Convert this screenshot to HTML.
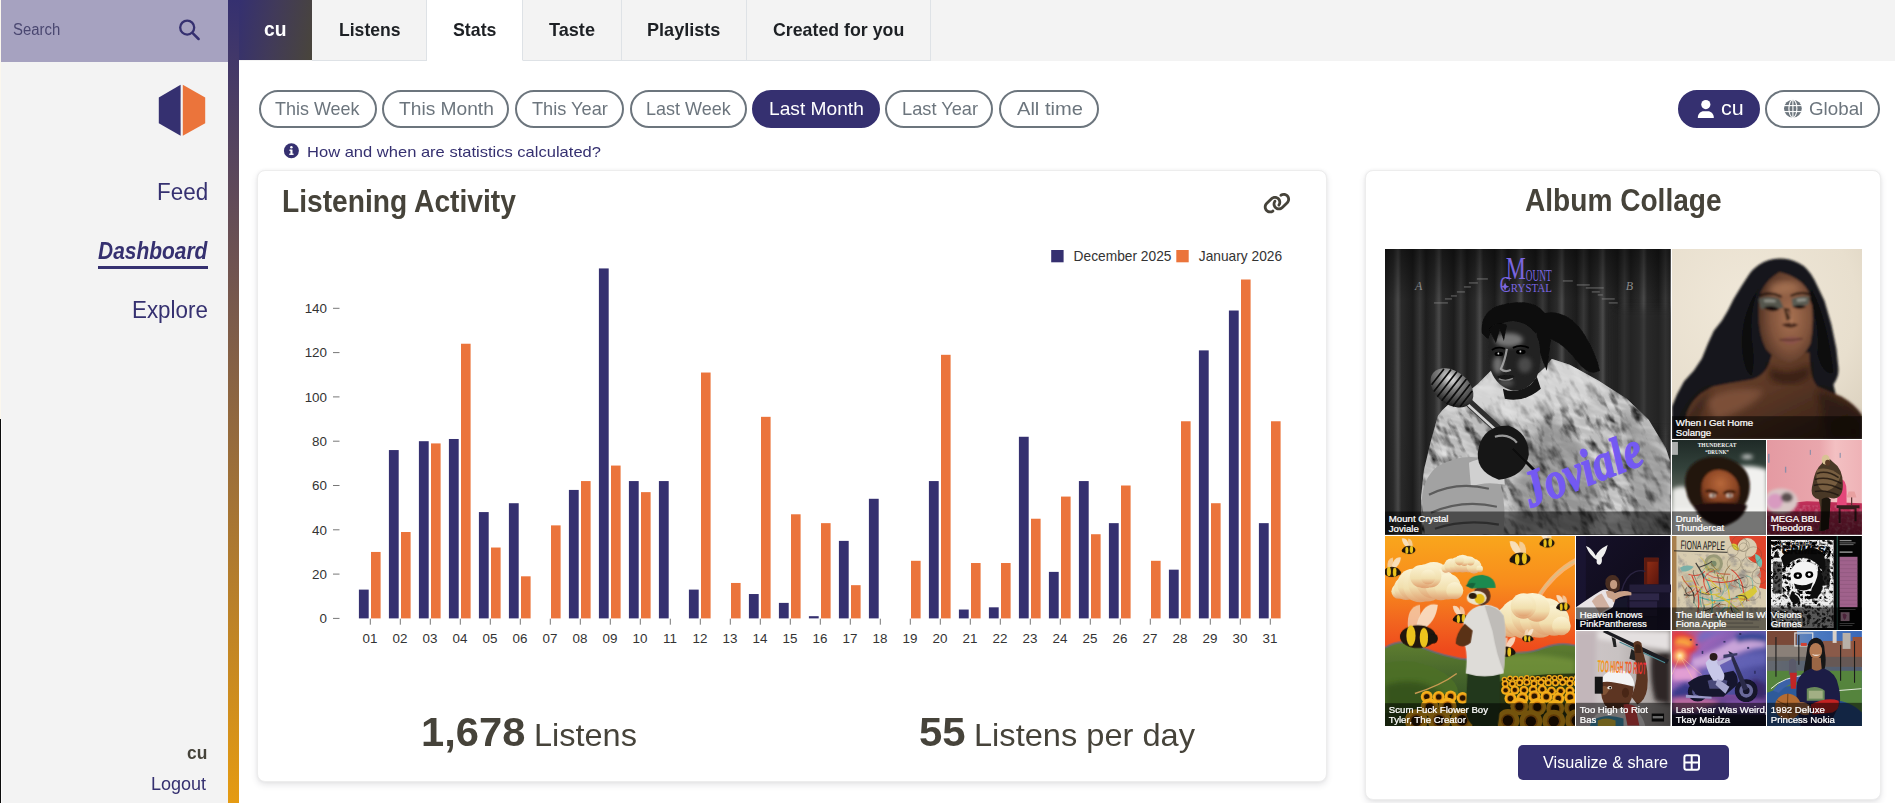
<!DOCTYPE html>
<html lang="en"><head><meta charset="utf-8"><title>cu - Stats - ListenBrainz</title>
<style>
html,body{margin:0;padding:0}
body{width:1895px;height:803px;overflow:hidden;background:#fff;position:relative;font-family:'Liberation Sans',sans-serif}
aside,header,main,nav,section,form,figure,h3{margin:0;padding:0;position:static;display:block}
.abs,.t,.pill,.tab,.card{position:absolute}
.t{line-height:1;white-space:pre;transform-origin:0 0;display:block;text-decoration:none;margin:0}
.pill{top:90px;height:34px;border:2px solid #6c757d;border-radius:19px;box-sizing:content-box}
.pill.on{background:#353070;border-color:#353070}
.tab{top:0;height:60px;background:#f3f3f3;border-right:1px solid #dee2e6;border-bottom:1px solid #dee2e6}
.card{background:#fff;border:1px solid #ededed;border-radius:8px;box-shadow:0 3px 6px rgba(60,64,80,.13),0 0 3px rgba(60,64,80,.06);box-sizing:border-box}
</style></head><body>
<header id="topbar">
<div class="abs" style="left:239px;top:0;width:1656px;height:61px;background:#f3f3f3"></div>
<nav id="tabs">
<div class="abs" style="left:239px;top:0;width:73px;height:60px;background:linear-gradient(100deg,#353070 0%,#413a5a 45%,#49453b 100%)"></div>
<div class="tab" style="left:312px;width:114px"></div>
<div class="tab active" style="left:427px;width:95px;background:#fff;border-bottom-color:#fff"></div>
<div class="tab" style="left:523px;width:98px"></div>
<div class="tab" style="left:622px;width:124px"></div>
<div class="tab" style="left:747px;width:183px"></div>
<a class="t" href="#" style="left:263.76px;top:19.10px;font-size:20.5px;color:#fff;transform:scaleX(0.9398);font-weight:700;">cu</a>
<a class="t" href="#" style="left:338.81px;top:20.10px;font-size:19px;color:#1d2024;transform:scaleX(0.9249);font-weight:700;">Listens</a>
<a class="t" href="#" style="left:452.65px;top:20.10px;font-size:19px;color:#1d2024;transform:scaleX(0.9348);font-weight:700;">Stats</a>
<a class="t" href="#" style="left:549.04px;top:20.10px;font-size:19px;color:#1d2024;transform:scaleX(0.9528);font-weight:700;">Taste</a>
<a class="t" href="#" style="left:647.48px;top:20.10px;font-size:19px;color:#1d2024;transform:scaleX(0.9515);font-weight:700;">Playlists</a>
<a class="t" href="#" style="left:773.48px;top:20.10px;font-size:19px;color:#1d2024;transform:scaleX(0.9347);font-weight:700;">Created for you</a>
</nav></header>
<aside id="sidebar">
<div class="abs" style="left:0;top:0;width:228px;height:803px;background:#f3f3f3"></div>
<form id="search"><div class="abs" style="left:0;top:0;width:228px;height:61.5px;background:#a6a2c0"></div>
<svg class="abs" style="left:177px;top:18px" width="24" height="24" viewBox="177 18 24 24"><circle cx="187.2" cy="27.6" r="7" fill="none" stroke="#353070" stroke-width="2.3"/><line x1="192.4" y1="32.8" x2="198.6" y2="39" stroke="#353070" stroke-width="2.5" stroke-linecap="round"/></svg>
<span class="t" style="left:12.70px;top:22.08px;font-size:15.8px;color:#4a4770;transform:scaleX(0.9436);font-weight:400;">Search</span></form>
<div class="abs" style="left:228px;top:0;width:11px;height:803px;background:linear-gradient(180deg,#353070 0%,#e59b12 100%)"></div>
<div class="abs" style="left:0;top:0;width:1px;height:419px;background:#fbf7ee"></div>
<div class="abs" style="left:0;top:419px;width:1px;height:384px;background:#0c0c0c"></div>
<div class="abs" style="left:1px;top:419px;width:1px;height:384px;background:#fbfbfb"></div>
<svg class="abs" id="logo" style="left:157px;top:83px" width="50" height="55" viewBox="157 83 50 55"><polygon points="180.6,84.8 180.6,135.8 158.8,123.2 158.8,97.4" fill="#353070"/><polygon points="182.8,84.8 205.2,97.4 205.2,123.2 182.8,135.8" fill="#eb743b"/></svg>
<nav id="sidenav">
<a class="t" href="#" style="left:156.72px;top:181.41px;font-size:23px;color:#353070;transform:scaleX(0.9746);font-weight:400;">Feed</a>
<a class="t" href="#" style="left:98.22px;top:239.90px;font-size:23px;color:#353070;transform:scaleX(0.9107);font-weight:700;font-style:italic;">Dashboard</a>
<a class="t" href="#" style="left:131.52px;top:299.01px;font-size:23px;color:#353070;transform:scaleX(0.9731);font-weight:400;">Explore</a>
<div class="abs" style="left:98px;top:265.6px;width:109.5px;height:3.2px;background:#353070"></div>
</nav>
<div id="userbox"><strong class="t" style="left:187.20px;top:743.10px;font-size:19px;color:#46433a;transform:scaleX(0.9146);font-weight:700;">cu</strong><a class="t" href="#" style="left:151.19px;top:774.02px;font-size:19px;color:#353070;transform:scaleX(0.9486);font-weight:400;">Logout</a></div>
</aside>
<main id="stats">
<nav id="range">
<div class="pill" style="left:259.0px;width:113.6px"></div>
<div class="pill" style="left:382.3px;width:122.9px"></div>
<div class="pill" style="left:515.0px;width:105.0px"></div>
<div class="pill" style="left:630.0px;width:112.6px"></div>
<div class="pill on" style="left:752.0px;width:124.0px"></div>
<div class="pill" style="left:885.0px;width:104.4px"></div>
<div class="pill" style="left:999.0px;width:96.0px"></div>
<span class="t" style="left:275.36px;top:98.82px;font-size:19px;color:#6c757d;transform:scaleX(0.9454);font-weight:400;">This Week</span>
<span class="t" style="left:398.73px;top:98.82px;font-size:19px;color:#6c757d;transform:scaleX(1.0093);font-weight:400;">This Month</span>
<span class="t" style="left:531.95px;top:98.82px;font-size:19px;color:#6c757d;transform:scaleX(0.9579);font-weight:400;">This Year</span>
<span class="t" style="left:646.19px;top:98.82px;font-size:19px;color:#6c757d;transform:scaleX(0.9474);font-weight:400;">Last Week</span>
<span class="t" style="left:768.79px;top:98.82px;font-size:19px;color:#fff;transform:scaleX(1.0087);font-weight:400;">Last Month</span>
<span class="t" style="left:901.57px;top:98.82px;font-size:19px;color:#6c757d;transform:scaleX(0.9590);font-weight:400;">Last Year</span>
<span class="t" style="left:1016.64px;top:98.82px;font-size:19px;color:#6c757d;transform:scaleX(1.0576);font-weight:400;">All time</span>
<svg class="abs" style="left:283px;top:142px" width="17" height="17" viewBox="283 142 17 17"><circle cx="291.4" cy="150.7" r="7.5" fill="#353070"/><rect x="290.4" y="149.6" width="2.1" height="5" fill="#fff"/><rect x="289.4" y="149.6" width="2" height="1.3" fill="#fff"/><rect x="289.2" y="153.6" width="4.4" height="1.3" fill="#fff"/><circle cx="291.4" cy="147.2" r="1.25" fill="#fff"/></svg>
<a class="t" href="#" style="left:306.94px;top:143.69px;font-size:15px;color:#353070;transform:scaleX(1.1018);font-weight:400;">How and when are statistics calculated?</a>
</nav>
<nav id="scope">
<div class="pill on" style="left:1677.8px;width:78.0px"></div>
<div class="pill" style="left:1764.9px;width:111.1px"></div>
<svg class="abs" style="left:1697px;top:99px" width="18" height="20" viewBox="1697 99 18 20"><circle cx="1705.8" cy="104.6" r="4.6" fill="#fff"/><path d="M1697.8 117.9c0-4.2 2.8-6.6 6-6.6h4c3.2 0 6 2.4 6 6.6z" fill="#fff"/></svg>
<svg class="abs" style="left:1783px;top:99px" width="20" height="20" viewBox="1783 99 20 20"><circle cx="1792.9" cy="108.6" r="8.9" fill="#6c757d"/><g stroke="#fff" stroke-width="1.1" fill="none"><ellipse cx="1792.9" cy="108.6" rx="4" ry="8.9"/><line x1="1792.9" y1="99.7" x2="1792.9" y2="117.5"/><line x1="1784" y1="105.6" x2="1801.8" y2="105.6"/><line x1="1784" y1="111.6" x2="1801.8" y2="111.6"/></g></svg>
<span class="t" style="left:1720.83px;top:97.92px;font-size:20px;color:#fff;transform:scaleX(1.0748);font-weight:400;">cu</span>
<span class="t" style="left:1808.83px;top:98.92px;font-size:19px;color:#6c757d;transform:scaleX(0.9874);font-weight:400;">Global</span>
</nav>
<section id="listening-activity">
<div class="card" style="left:257px;top:169.5px;width:1069.5px;height:612px"></div>
<h3 class="t" style="left:282.16px;top:185.50px;font-size:31px;color:#46433a;transform:scaleX(0.9091);font-weight:700;">Listening Activity</h3>
<svg class="abs" style="left:1262.7px;top:191.9px" width="27.84" height="22.27" viewBox="0 0 640 512"><path fill="#46433a" d="M579.8 267.7c56.5-56.5 56.500-148 0-204.500c-50-50-128.800-56.500-186.300-15.400l-1.600 1.100c-14.400 10.300-17.700 30.300-7.400 44.600s30.300 17.700 44.600 7.400l1.600-1.100c32.100-22.900 76-19.300 103.800 8.600c31.500 31.500 31.500 82.500 0 114L422.300 334.800c-31.500 31.500-82.500 31.500-114 0c-27.900-27.900-31.500-71.800-8.600-103.800l1.100-1.600c10.300-14.400 6.900-34.400-7.400-44.600s-34.400-6.900-44.600 7.400l-1.100 1.600C206.500 251.200 213 330 263 380c56.500 56.500 148 56.500 204.500 0L579.800 267.700zM60.200 244.300c-56.500 56.500-56.500 148 0 204.500c50 50 128.800 56.500 186.300 15.400l1.600-1.100c14.400-10.300 17.700-30.300 7.400-44.600s-30.300-17.700-44.600-7.400l-1.600 1.100c-32.100 22.900-76 19.300-103.800-8.600C74 372 74 321 105.500 289.500L217.700 177.200c31.500-31.500 82.500-31.500 114 0c27.900 27.900 31.500 71.800 8.600 103.900l-1.100 1.600c-10.300 14.400-6.900 34.400 7.400 44.600s34.400 6.900 44.600-7.400l1.100-1.600C433.500 260.800 427 182 377 132c-56.500-56.500-148-56.500-204.500 0L60.200 244.300z"/></svg>
<svg class="abs" style="left:258px;top:230px" width="1068" height="430" viewBox="258 230 1068 430" font-family="Liberation Sans, sans-serif" font-size="13.4" fill="#333">
<line x1="333" x2="339.5" y1="618.40" y2="618.40" stroke="#777" stroke-width="1"/>
<text x="327" y="623.10" text-anchor="end">0</text>
<line x1="333" x2="339.5" y1="574.10" y2="574.10" stroke="#777" stroke-width="1"/>
<text x="327" y="578.80" text-anchor="end">20</text>
<line x1="333" x2="339.5" y1="529.80" y2="529.80" stroke="#777" stroke-width="1"/>
<text x="327" y="534.50" text-anchor="end">40</text>
<line x1="333" x2="339.5" y1="485.50" y2="485.50" stroke="#777" stroke-width="1"/>
<text x="327" y="490.20" text-anchor="end">60</text>
<line x1="333" x2="339.5" y1="441.20" y2="441.20" stroke="#777" stroke-width="1"/>
<text x="327" y="445.90" text-anchor="end">80</text>
<line x1="333" x2="339.5" y1="396.90" y2="396.90" stroke="#777" stroke-width="1"/>
<text x="327" y="401.60" text-anchor="end">100</text>
<line x1="333" x2="339.5" y1="352.60" y2="352.60" stroke="#777" stroke-width="1"/>
<text x="327" y="357.30" text-anchor="end">120</text>
<line x1="333" x2="339.5" y1="308.30" y2="308.30" stroke="#777" stroke-width="1"/>
<text x="327" y="313.00" text-anchor="end">140</text>
<line x1="370.3" x2="370.3" y1="618.7" y2="624.7" stroke="#777" stroke-width="1"/>
<text x="370.0" y="643" text-anchor="middle">01</text>
<rect x="358.9" y="589.61" width="9.8" height="28.79" fill="#353070"/>
<rect x="371.0" y="551.95" width="9.6" height="66.45" fill="#eb743b"/>
<line x1="400.3" x2="400.3" y1="618.7" y2="624.7" stroke="#777" stroke-width="1"/>
<text x="400.0" y="643" text-anchor="middle">02</text>
<rect x="388.9" y="450.06" width="9.8" height="168.34" fill="#353070"/>
<rect x="401.0" y="532.01" width="9.6" height="86.38" fill="#eb743b"/>
<line x1="430.3" x2="430.3" y1="618.7" y2="624.7" stroke="#777" stroke-width="1"/>
<text x="430.0" y="643" text-anchor="middle">03</text>
<rect x="418.9" y="441.20" width="9.8" height="177.20" fill="#353070"/>
<rect x="431.0" y="443.41" width="9.6" height="174.98" fill="#eb743b"/>
<line x1="460.3" x2="460.3" y1="618.7" y2="624.7" stroke="#777" stroke-width="1"/>
<text x="460.0" y="643" text-anchor="middle">04</text>
<rect x="448.9" y="438.99" width="9.8" height="179.41" fill="#353070"/>
<rect x="461.0" y="343.74" width="9.6" height="274.66" fill="#eb743b"/>
<line x1="490.3" x2="490.3" y1="618.7" y2="624.7" stroke="#777" stroke-width="1"/>
<text x="490.0" y="643" text-anchor="middle">05</text>
<rect x="478.9" y="512.08" width="9.8" height="106.32" fill="#353070"/>
<rect x="491.0" y="547.52" width="9.6" height="70.88" fill="#eb743b"/>
<line x1="520.3" x2="520.3" y1="618.7" y2="624.7" stroke="#777" stroke-width="1"/>
<text x="520.0" y="643" text-anchor="middle">06</text>
<rect x="508.9" y="503.22" width="9.8" height="115.18" fill="#353070"/>
<rect x="521.0" y="576.31" width="9.6" height="42.08" fill="#eb743b"/>
<line x1="550.3" x2="550.3" y1="618.7" y2="624.7" stroke="#777" stroke-width="1"/>
<text x="550.0" y="643" text-anchor="middle">07</text>
<rect x="551.0" y="525.37" width="9.6" height="93.03" fill="#eb743b"/>
<line x1="580.3" x2="580.3" y1="618.7" y2="624.7" stroke="#777" stroke-width="1"/>
<text x="580.0" y="643" text-anchor="middle">08</text>
<rect x="568.9" y="489.93" width="9.8" height="128.47" fill="#353070"/>
<rect x="581.0" y="481.07" width="9.6" height="137.33" fill="#eb743b"/>
<line x1="610.3" x2="610.3" y1="618.7" y2="624.7" stroke="#777" stroke-width="1"/>
<text x="610.0" y="643" text-anchor="middle">09</text>
<rect x="598.9" y="268.43" width="9.8" height="349.97" fill="#353070"/>
<rect x="611.0" y="465.56" width="9.6" height="152.83" fill="#eb743b"/>
<line x1="640.3" x2="640.3" y1="618.7" y2="624.7" stroke="#777" stroke-width="1"/>
<text x="640.0" y="643" text-anchor="middle">10</text>
<rect x="628.9" y="481.07" width="9.8" height="137.33" fill="#353070"/>
<rect x="641.0" y="492.14" width="9.6" height="126.25" fill="#eb743b"/>
<line x1="670.3" x2="670.3" y1="618.7" y2="624.7" stroke="#777" stroke-width="1"/>
<text x="670.0" y="643" text-anchor="middle">11</text>
<rect x="658.9" y="481.07" width="9.8" height="137.33" fill="#353070"/>
<line x1="700.3" x2="700.3" y1="618.7" y2="624.7" stroke="#777" stroke-width="1"/>
<text x="700.0" y="643" text-anchor="middle">12</text>
<rect x="688.9" y="589.61" width="9.8" height="28.79" fill="#353070"/>
<rect x="701.0" y="372.53" width="9.6" height="245.86" fill="#eb743b"/>
<line x1="730.3" x2="730.3" y1="618.7" y2="624.7" stroke="#777" stroke-width="1"/>
<text x="730.0" y="643" text-anchor="middle">13</text>
<rect x="731.0" y="582.96" width="9.6" height="35.44" fill="#eb743b"/>
<line x1="760.3" x2="760.3" y1="618.7" y2="624.7" stroke="#777" stroke-width="1"/>
<text x="760.0" y="643" text-anchor="middle">14</text>
<rect x="748.9" y="594.03" width="9.8" height="24.36" fill="#353070"/>
<rect x="761.0" y="416.83" width="9.6" height="201.56" fill="#eb743b"/>
<line x1="790.3" x2="790.3" y1="618.7" y2="624.7" stroke="#777" stroke-width="1"/>
<text x="790.0" y="643" text-anchor="middle">15</text>
<rect x="778.9" y="602.89" width="9.8" height="15.50" fill="#353070"/>
<rect x="791.0" y="514.29" width="9.6" height="104.10" fill="#eb743b"/>
<line x1="820.3" x2="820.3" y1="618.7" y2="624.7" stroke="#777" stroke-width="1"/>
<text x="820.0" y="643" text-anchor="middle">16</text>
<rect x="808.9" y="616.18" width="9.8" height="2.21" fill="#353070"/>
<rect x="821.0" y="523.15" width="9.6" height="95.24" fill="#eb743b"/>
<line x1="850.3" x2="850.3" y1="618.7" y2="624.7" stroke="#777" stroke-width="1"/>
<text x="850.0" y="643" text-anchor="middle">17</text>
<rect x="838.9" y="540.88" width="9.8" height="77.52" fill="#353070"/>
<rect x="851.0" y="585.17" width="9.6" height="33.22" fill="#eb743b"/>
<line x1="880.3" x2="880.3" y1="618.7" y2="624.7" stroke="#777" stroke-width="1"/>
<text x="880.0" y="643" text-anchor="middle">18</text>
<rect x="868.9" y="498.79" width="9.8" height="119.61" fill="#353070"/>
<line x1="910.3" x2="910.3" y1="618.7" y2="624.7" stroke="#777" stroke-width="1"/>
<text x="910.0" y="643" text-anchor="middle">19</text>
<rect x="911.0" y="560.81" width="9.6" height="57.59" fill="#eb743b"/>
<line x1="940.3" x2="940.3" y1="618.7" y2="624.7" stroke="#777" stroke-width="1"/>
<text x="940.0" y="643" text-anchor="middle">20</text>
<rect x="928.9" y="481.07" width="9.8" height="137.33" fill="#353070"/>
<rect x="941.0" y="354.81" width="9.6" height="263.58" fill="#eb743b"/>
<line x1="970.3" x2="970.3" y1="618.7" y2="624.7" stroke="#777" stroke-width="1"/>
<text x="970.0" y="643" text-anchor="middle">21</text>
<rect x="958.9" y="609.54" width="9.8" height="8.86" fill="#353070"/>
<rect x="971.0" y="563.02" width="9.6" height="55.38" fill="#eb743b"/>
<line x1="1000.3" x2="1000.3" y1="618.7" y2="624.7" stroke="#777" stroke-width="1"/>
<text x="1000.0" y="643" text-anchor="middle">22</text>
<rect x="988.9" y="607.32" width="9.8" height="11.07" fill="#353070"/>
<rect x="1001.0" y="563.02" width="9.6" height="55.38" fill="#eb743b"/>
<line x1="1030.3" x2="1030.3" y1="618.7" y2="624.7" stroke="#777" stroke-width="1"/>
<text x="1030.0" y="643" text-anchor="middle">23</text>
<rect x="1018.9" y="436.77" width="9.8" height="181.63" fill="#353070"/>
<rect x="1031.0" y="518.73" width="9.6" height="99.67" fill="#eb743b"/>
<line x1="1060.3" x2="1060.3" y1="618.7" y2="624.7" stroke="#777" stroke-width="1"/>
<text x="1060.0" y="643" text-anchor="middle">24</text>
<rect x="1048.9" y="571.88" width="9.8" height="46.52" fill="#353070"/>
<rect x="1061.0" y="496.57" width="9.6" height="121.82" fill="#eb743b"/>
<line x1="1090.3" x2="1090.3" y1="618.7" y2="624.7" stroke="#777" stroke-width="1"/>
<text x="1090.0" y="643" text-anchor="middle">25</text>
<rect x="1078.9" y="481.07" width="9.8" height="137.33" fill="#353070"/>
<rect x="1091.0" y="534.23" width="9.6" height="84.17" fill="#eb743b"/>
<line x1="1120.3" x2="1120.3" y1="618.7" y2="624.7" stroke="#777" stroke-width="1"/>
<text x="1120.0" y="643" text-anchor="middle">26</text>
<rect x="1108.9" y="523.15" width="9.8" height="95.24" fill="#353070"/>
<rect x="1121.0" y="485.50" width="9.6" height="132.90" fill="#eb743b"/>
<line x1="1150.3" x2="1150.3" y1="618.7" y2="624.7" stroke="#777" stroke-width="1"/>
<text x="1150.0" y="643" text-anchor="middle">27</text>
<rect x="1151.0" y="560.81" width="9.6" height="57.59" fill="#eb743b"/>
<line x1="1180.3" x2="1180.3" y1="618.7" y2="624.7" stroke="#777" stroke-width="1"/>
<text x="1180.0" y="643" text-anchor="middle">28</text>
<rect x="1168.9" y="569.67" width="9.8" height="48.73" fill="#353070"/>
<rect x="1181.0" y="421.26" width="9.6" height="197.13" fill="#eb743b"/>
<line x1="1210.3" x2="1210.3" y1="618.7" y2="624.7" stroke="#777" stroke-width="1"/>
<text x="1210.0" y="643" text-anchor="middle">29</text>
<rect x="1198.9" y="350.38" width="9.8" height="268.01" fill="#353070"/>
<rect x="1211.0" y="503.22" width="9.6" height="115.18" fill="#eb743b"/>
<line x1="1240.3" x2="1240.3" y1="618.7" y2="624.7" stroke="#777" stroke-width="1"/>
<text x="1240.0" y="643" text-anchor="middle">30</text>
<rect x="1228.9" y="310.51" width="9.8" height="307.88" fill="#353070"/>
<rect x="1241.0" y="279.50" width="9.6" height="338.89" fill="#eb743b"/>
<line x1="1270.3" x2="1270.3" y1="618.7" y2="624.7" stroke="#777" stroke-width="1"/>
<text x="1270.0" y="643" text-anchor="middle">31</text>
<rect x="1258.9" y="523.15" width="9.8" height="95.24" fill="#353070"/>
<rect x="1271.0" y="421.26" width="9.6" height="197.13" fill="#eb743b"/>
<rect x="1051.2" y="250" width="12.4" height="12.3" fill="#353070"/>
<text x="1073.6" y="261.2" font-size="13.75">December 2025</text>
<rect x="1176.3" y="250" width="12.4" height="12.3" fill="#eb743b"/>
<text x="1198.8" y="261.2" font-size="13.75">January 2026</text>
</svg>
<strong class="t" style="left:421.26px;top:711.90px;font-size:40px;color:#46433a;transform:scaleX(1.0422);font-weight:700;">1,678</strong>
<span class="t" style="left:534.01px;top:719.90px;font-size:31.5px;color:#46433a;transform:scaleX(1.0309);font-weight:400;">Listens</span>
<strong class="t" style="left:918.63px;top:711.80px;font-size:40px;color:#46433a;transform:scaleX(1.0464);font-weight:700;">55</strong>
<span class="t" style="left:973.80px;top:719.80px;font-size:31.5px;color:#46433a;transform:scaleX(1.0344);font-weight:400;">Listens per day</span>
</section>
<section id="album-collage">
<div class="card" style="left:1365px;top:169.5px;width:515.5px;height:630px"></div>
<h3 class="t" style="left:1525.23px;top:185.20px;font-size:31px;color:#46433a;transform:scaleX(0.9058);font-weight:700;">Album Collage</h3>
<div class="abs" id="collage" style="left:1385.0px;top:249.2px;width:477px;height:476.4px;background:#fff;overflow:hidden">
<svg class="abs" style="left:0.00px;top:0.00px" width="285.70" height="285.70" viewBox="0 0 286 286" preserveAspectRatio="none">
<defs>
<linearGradient id="aCur" x1="0" x2="1" y1="0" y2="0" spreadMethod="repeat" gradientUnits="userSpaceOnUse" gradientTransform="scale(41 1)">
<stop offset="0" stop-color="#202020"/><stop offset=".2" stop-color="#2e2e2e"/><stop offset=".32" stop-color="#505050"/><stop offset=".4" stop-color="#2d2d2d"/><stop offset=".68" stop-color="#1e1e1e"/><stop offset=".85" stop-color="#3c3c3c"/><stop offset="1" stop-color="#202020"/>
</linearGradient>
<linearGradient id="aVig" x1="0" x2="0" y1="0" y2="1"><stop offset="0" stop-color="#000" stop-opacity=".5"/><stop offset=".18" stop-color="#000" stop-opacity=".08"/><stop offset=".6" stop-color="#000" stop-opacity=".05"/><stop offset="1" stop-color="#000" stop-opacity=".12"/></linearGradient>
<filter id="aFur" x="0" y="0" width="100%" height="100%"><feTurbulence type="fractalNoise" baseFrequency=".11 .045" numOctaves="3" seed="4" result="n"/><feColorMatrix in="n" type="matrix" values="0 0 0 0 0  0 0 0 0 0  0 0 0 0 0  2.4 0 0 0 -1.12" result="m"/><feComposite in="m" in2="SourceGraphic" operator="in"/></filter>
<filter id="aFur2" x="0" y="0" width="100%" height="100%"><feTurbulence type="fractalNoise" baseFrequency=".05 .16" numOctaves="2" seed="9" result="n"/><feColorMatrix in="n" type="matrix" values="0 0 0 0 1  0 0 0 0 1  0 0 0 0 1  2.4 0 0 0 -1.0" result="m"/><feComposite in="m" in2="SourceGraphic" operator="in"/></filter>
<filter id="aB2"><feGaussianBlur stdDeviation="2"/></filter>
<filter id="aB4"><feGaussianBlur stdDeviation="4"/></filter>
<filter id="aB1"><feGaussianBlur stdDeviation=".7"/></filter>
<radialGradient id="aMic" cx=".35" cy=".3" r=".75"><stop offset="0" stop-color="#e6e6e6"/><stop offset=".4" stop-color="#7c7c7c"/><stop offset="1" stop-color="#1c1c1c"/></radialGradient>
<clipPath id="aCoat"><path d="M37 286 L36 249 L39 221 L46 192 L53 167 Q62 154 75 150 L93 135 L107 121 Q112 132 126 136 Q150 134 167 110 L185 116 L214 132 L242 150 L264 171 L281 199 L286 214 L286 286Z"/></clipPath>
</defs>
<rect width="286" height="286" fill="url(#aCur)"/>
<rect width="286" height="286" fill="url(#aVig)"/>

<rect x="230" y="60" width="60" height="120" fill="#2a2a2a" opacity=".5" filter="url(#aB4)"/>
<!-- coat -->
<g clip-path="url(#aCoat)">
<rect width="286" height="286" fill="#bdbdbd"/>
<g transform="rotate(-28 160 200)"><rect x="-60" y="40" width="420" height="330" fill="#2a2a2a" filter="url(#aFur)"/></g>
<g transform="rotate(20 160 200)"><rect x="-60" y="40" width="420" height="330" fill="#fff" filter="url(#aFur2)" opacity=".55"/></g>
<path d="M53 167 L75 150 L93 135 L107 121 Q112 132 126 136 Q150 134 167 110 L185 116 L214 132 L225 145 Q190 150 160 168 Q120 182 84 160Z" fill="#e2e2e2" opacity=".6" filter="url(#aB2)"/>
<path d="M160 170 Q200 178 215 250 L200 286 L130 286 Q120 230 160 170Z" fill="#4a4a4a" opacity=".35" filter="url(#aB4)"/>
<path d="M236 160 Q270 180 286 220 L286 286 L250 286Z" fill="#777" opacity=".45" filter="url(#aB4)"/>
<path d="M37 250 Q38 230 52 218 Q76 204 100 210 L116 236 Q122 260 118 286 L40 286Z" fill="#a2a2a2"/><path d="M84 214 Q100 206 118 214 L120 236 Q100 232 86 238Z" fill="#d0d0d0"/>
<path d="M44 246 Q72 232 104 240 M46 264 Q78 250 112 258 M50 280 Q80 270 114 276" stroke="#5c5c5c" stroke-width="2.2" fill="none" filter="url(#aB1)"/>
<path d="M96 160 Q110 190 104 214 Q120 210 128 180Z" fill="#3a3a3a" opacity=".6" filter="url(#aB2)"/>
</g>
<!-- hair + head -->
<g filter="url(#aB1)">
<path d="M97 84 Q95 62 116 56 Q148 48 160 64 Q184 60 200 86 Q212 106 215 122 Q204 128 192 112 Q180 96 166 90 L162 122 Q152 100 152 84 Q122 72 103 90Z" fill="#0b0b0b"/>
<path d="M104 88 Q108 74 128 72 Q148 74 154 92 Q158 112 152 128 Q144 142 128 142 Q112 138 106 122 Q102 104 104 88Z" fill="#242424"/>
</g>
<g filter="url(#aB2)">
<ellipse cx="124" cy="91" rx="14" ry="7" fill="#8c8c8c" opacity=".8"/>
<ellipse cx="113" cy="116" rx="5" ry="9" fill="#8a8a8a" opacity=".75"/>
<ellipse cx="140" cy="116" rx="7" ry="8" fill="#5c5c5c" opacity=".7"/>
<ellipse cx="121" cy="134" rx="8" ry="4" fill="#606060" opacity=".7"/>
</g>
<g filter="url(#aB1)">
<path d="M122 100 Q120 112 116 120 Q120 124 126 121" stroke="#b4b4b4" stroke-width="2.2" fill="none" opacity=".8"/>
<path d="M104 80 Q112 72 122 76 L119 92 L115 80 L111 94 L106 84Z" fill="#0b0b0b"/>
<path d="M107 101 Q113 97 120 100" stroke="#050505" stroke-width="1.8" fill="none"/><path d="M128 99 Q136 95 144 99" stroke="#050505" stroke-width="1.8" fill="none"/>
<ellipse cx="114" cy="105" rx="4.400" ry="2.200" fill="#060606"/><ellipse cx="136" cy="103" rx="4.800" ry="2.400" fill="#060606"/>
<circle cx="113.500" cy="104.600" r=".9" fill="#ddd"/><circle cx="135.500" cy="102.600" r=".9" fill="#ddd"/>
<path d="M112 128 Q120 124.500 130 127.500 Q122 135 112 128Z" fill="#141414"/><path d="M114 130 Q121 133 128 129.500" stroke="#8a8a8a" stroke-width="1.200" fill="none"/>
<path d="M118 140 Q130 146 146 136 L152 128 L156 140 Q140 154 120 150Z" fill="#131313"/>
</g>
<!-- mic -->
<g filter="url(#aB1)">
<path d="M82 152 L128 194" stroke="#2e2e2e" stroke-width="8.5" stroke-linecap="round"/>
<path d="M81 154 L126 195" stroke="#d4d4d4" stroke-width="2.6"/>
<ellipse cx="67" cy="139" rx="24" ry="16.5" transform="rotate(38 67 139)" fill="url(#aMic)"/>
<g stroke="#0c0c0c" stroke-width="1.7" transform="rotate(38 67 139)"><path d="M49 129v20M55 125v28M61 123v32M67 122.500v33M73 123v32M79 125v28M85 129v20"/></g>
<path d="M94 198 Q100 176 124 177 Q144 184 144 206 Q140 228 114 231 Q88 222 94 198Z" fill="#161616"/>
<path d="M110 188 Q124 184 132 194" stroke="#9a9a9a" stroke-width="2.2" fill="none"/>
<path d="M128 200 L150 222" stroke="#111" stroke-width="3"/>
</g>
<!-- titles -->
<g fill="#7b66e0" font-family="Liberation Serif, serif">
<text x="121" y="30" font-size="32" textLength="20" lengthAdjust="spacingAndGlyphs">M</text>
<text x="141" y="32" font-size="17" textLength="26" lengthAdjust="spacingAndGlyphs">OUNT</text>
<text x="115" y="43.500" font-size="23" textLength="11" lengthAdjust="spacingAndGlyphs">C</text>
<text x="126" y="43" font-size="13.500" textLength="41" lengthAdjust="spacingAndGlyphs">RYSTAL</text>
<path d="M119 36.500 l1.200 -3 l1.200 3 l3 1.200 l-3 1.200 l-1.200 3 l-1.200 -3 l-3 -1.200z"/>
</g>
<g fill="#8a8a8a" font-family="Liberation Serif, serif" font-style="italic" font-size="12"><text x="30" y="41">A</text><text x="241" y="41">B</text></g>
<g stroke="#8c8c8c" stroke-width="1" opacity=".7"><path d="M92 30h11M84 34h9M79 38h7M72 43h8M66 47h6M60 50h7M49 54h14"/><path d="M178 32h10M192 36h13M201 39h18M207 43h8M213 46h5M217 50h13M224 54h9"/></g>
<g transform="translate(146 259) rotate(-21)"><text x="0" y="0" font-family="Liberation Serif, serif" font-style="italic" font-weight="700" font-size="52" fill="#7459f2" stroke="#7459f2" stroke-width="1.2" textLength="124" lengthAdjust="spacingAndGlyphs">Joviale</text></g>

<rect x="0" y="262.8" width="286" height="24.18" fill="#000" fill-opacity=".52"/>
<g font-family="Liberation Sans, sans-serif" font-size="9.7" fill="#fff" stroke="#fff" stroke-width=".25"><text x="3.8" y="273.0">Mount Crystal</text><text x="3.8" y="283.0">Joviale</text></g>
</svg>
<svg class="abs" style="left:286.70px;top:0.00px" width="190.30" height="190.30" viewBox="0 0 191 191" preserveAspectRatio="none">
<defs>
<radialGradient id="bBg" cx=".4" cy=".3" r=".95"><stop offset="0" stop-color="#f0e8d9"/><stop offset=".6" stop-color="#e8dfce"/><stop offset="1" stop-color="#d6cbb8"/></radialGradient>
<linearGradient id="bSk" x1="0" x2="1" y1="0" y2="1"><stop offset="0" stop-color="#6e442e"/><stop offset=".45" stop-color="#5c3826"/><stop offset="1" stop-color="#2e1c13"/></linearGradient>
<radialGradient id="bFace" cx=".58" cy=".5" r=".7"><stop offset="0" stop-color="#a97252"/><stop offset=".5" stop-color="#82543c"/><stop offset="1" stop-color="#3c241a"/></radialGradient>
<filter id="bB"><feGaussianBlur stdDeviation=".9"/></filter>
<filter id="bB3"><feGaussianBlur stdDeviation="3.2"/></filter>
</defs>
<rect width="191" height="191" fill="url(#bBg)"/>
<g filter="url(#bB)">
<path d="M108 9.500 Q96 10 87 16 Q80 21 77 26 L70 37 L62 50 L56 62 L50 72 L42 82 L36 95 L30 110 L22 122 L12 133 L5 146 L0 158 L0 191 L175 191 L162 136 Q168 128 167 119 L165 100 L160 76 L153 52 L143 31 Q136 18 127 14 Q118 9.500 108 9.500Z" fill="#15161a"/>
<path d="M10 191 L15 164 Q20 152 29 145 L41 138 L56 135 L80 131 Q95 127 99 110 L101 104 L138 104 Q138 130 146 138 L170 148 Q184 156 191 167 L191 191Z" fill="url(#bSk)"/>
<path d="M34 152 Q60 136 92 142 Q84 158 44 172Z" fill="#94644a" opacity=".55" filter="url(#bB3)"/>
<path d="M98 118 Q116 130 138 116 L138 128 Q118 142 98 130Z" fill="#2a180f" opacity=".7" filter="url(#bB3)"/>
<path d="M146 142 Q172 150 191 170 L191 191 L156 191Z" fill="#22130d" opacity=".6" filter="url(#bB3)"/>
<path d="M14 170 Q24 150 40 142 Q28 162 24 191 L10 191Z" fill="#2a1a14" opacity=".6" filter="url(#bB3)"/>
<path d="M87 58 Q86 36 108 23 Q136 30 140 52 Q143 74 139 95 Q132 110 118 114 Q104 112 94 100 Q86 84 87 58Z" fill="url(#bFace)"/>
<path d="M98 38 Q112 28 130 38 Q120 46 100 46Z" fill="#b07c5a" opacity=".7" filter="url(#bB3)"/>
<path d="M87 50 Q97 46 108 50 L112 59 Q100 61 89 60Z" fill="#55564e"/><path d="M92 51 Q98 49.500 104 51.500 L104 53.500 L93 53.500Z" fill="#8e8f86"/>
<path d="M120 50 Q129 46 138 48 L137 56 Q129 57.500 121 58Z" fill="#5a5b52"/><path d="M125 50.500 Q130 49 135 50 L134.500 52 L126 53Z" fill="#96978e"/>
<path d="M88 47 Q98 42 110 48" stroke="#120b08" stroke-width="2" fill="none"/><path d="M119 47 Q130 42 139 46" stroke="#120b08" stroke-width="2" fill="none"/>
<path d="M92 59 Q100 55 108 60.500 Q100 65 92 59Z" fill="#140c08"/><path d="M121 58 Q128 54.500 135 58 Q128 62 121 58Z" fill="#140c08"/>
<path d="M112 59 L115 72 L120 70 L118 60Z" fill="#26160f" opacity=".75"/>
<path d="M110 76 Q118 72 127 76 Q119 82 110 76Z" fill="#46281b"/><path d="M116 62 Q121 70 120 76" stroke="#b98262" stroke-width="1.600" fill="none" opacity=".7"/>
<path d="M108 91 Q119 85 131 90 Q120 101 108 91Z" fill="#8a5248"/><path d="M108 91 Q120 92.500 131 90" stroke="#3a1e18" stroke-width="1" fill="none"/>
<path d="M87 40 Q78 60 80 90 Q84 112 80 128 Q70 120 70 90 Q72 60 87 40Z" fill="#0d0d11"/>
<path d="M140 40 Q156 70 162 124 Q152 128 146 106 Q148 72 138 50Z" fill="#0d0d11"/>
</g>

<rect x="0" y="167.8" width="191" height="24.22" fill="#000" fill-opacity=".52"/>
<g font-family="Liberation Sans, sans-serif" font-size="9.7" fill="#fff" stroke="#fff" stroke-width=".25"><text x="3.8" y="178.0">When I Get Home</text><text x="3.8" y="188.0">Solange</text></g>
</svg>
<svg class="abs" style="left:286.70px;top:191.30px" width="94.40" height="94.40" viewBox="0 0 95.4 95.4" preserveAspectRatio="none">
<defs>
<linearGradient id="cW" x1="0" x2="0" y1="0" y2="1"><stop offset="0" stop-color="#1f2a27"/><stop offset=".3" stop-color="#33423b"/><stop offset=".55" stop-color="#5a6258"/><stop offset="1" stop-color="#c8c8c4"/></linearGradient>
<radialGradient id="cF" cx=".5" cy=".35" r=".7"><stop offset="0" stop-color="#b8683a"/><stop offset=".6" stop-color="#8a4424"/><stop offset="1" stop-color="#3a1a0c"/></radialGradient>
<filter id="cB"><feGaussianBlur stdDeviation=".9"/></filter><filter id="cB2"><feGaussianBlur stdDeviation="2.2"/></filter>
</defs>
<rect width="95.4" height="95.4" fill="url(#cW)"/>
<g filter="url(#cB2)"><path d="M60 28 Q80 24 96 30 L96 74 L66 74 Q80 50 60 28Z" fill="#f1f1ef"/><path d="M0 50 Q10 44 18 50 L26 74 L0 74Z" fill="#e9e9e6"/><rect x="0" y="70" width="96" height="26" fill="#f4f4f2"/><ellipse cx="76" cy="17" rx="6" ry="2" fill="#ddd"/></g>
<g filter="url(#cB)">
<path d="M14 50 Q10 30 26 21 Q46 12 64 22 Q82 32 78 54 Q76 66 66 72 Q48 80 30 74 Q16 66 14 50Z" fill="#24150d"/>
<path d="M30 44 Q34 30 48 30 Q64 32 68 48 Q70 62 62 70 L34 70 Q28 58 30 44Z" fill="url(#cF)"/>
<path d="M34 52 Q40 50 46 54 M52 54 Q58 50 64 53" stroke="#1a0a04" stroke-width="2.4" fill="none"/>
<ellipse cx="41" cy="56" rx="3" ry="1.8" fill="#e8ddd0"/><ellipse cx="58" cy="56" rx="3" ry="1.8" fill="#e8ddd0"/><circle cx="41.5" cy="56" r="1.2" fill="#000"/><circle cx="58.5" cy="56" r="1.2" fill="#000"/>
<path d="M22 66 Q48 60 76 66 Q72 82 50 88 Q28 84 22 66Z" fill="#1f1009"/>
</g>
<g fill="#f4f4f4" font-family="Liberation Serif, serif" font-weight="700" text-anchor="middle"><text x="45.5" y="7.4" font-size="5.2" textLength="39" lengthAdjust="spacingAndGlyphs">THUNDERCAT</text><text x="45.5" y="14" font-size="5.2" textLength="24" lengthAdjust="spacingAndGlyphs">“DRUNK”</text></g>
<rect x="0" y="2" width="6" height="13" fill="#cfcfcf" opacity=".8"/>

<rect x="0" y="72.2" width="95.4" height="24.20" fill="#000" fill-opacity=".52"/>
<g font-family="Liberation Sans, sans-serif" font-size="9.7" fill="#fff" stroke="#fff" stroke-width=".25"><text x="3.8" y="82.4">Drunk</text><text x="3.8" y="92.4">Thundercat</text></g>
</svg>
<svg class="abs" style="left:382.10px;top:191.30px" width="94.90" height="94.40" viewBox="0 0 95.4 95.4" preserveAspectRatio="none">
<defs>
<linearGradient id="dW" x1="0" x2="1" y1="0" y2="0"><stop offset="0" stop-color="#e49aa2"/><stop offset=".55" stop-color="#e9a6ac"/><stop offset=".72" stop-color="#f3c0c2"/><stop offset="1" stop-color="#eeb2b6"/></linearGradient>
<linearGradient id="dFl" x1="0" x2="0" y1="0" y2="1"><stop offset="0" stop-color="#c2305a"/><stop offset="1" stop-color="#8c1c3c"/></linearGradient>
<filter id="dB"><feGaussianBlur stdDeviation=".8"/></filter><filter id="dB2"><feGaussianBlur stdDeviation="1.8"/></filter>
<filter id="dN"><feTurbulence type="fractalNoise" baseFrequency=".25" numOctaves="2" seed="3"/><feColorMatrix type="matrix" values="0 0 0 0 .95  0 0 0 0 .9  0 0 0 0 .92  1.6 0 0 0 -.7"/><feComposite in2="SourceGraphic" operator="in"/></filter>
</defs>
<rect width="95.4" height="95.4" fill="url(#dW)"/>
<path d="M0 66 L40 62 L95.4 64 L95.4 95.4 L0 95.4Z" fill="url(#dFl)"/>
<rect x="0" y="66" width="95.4" height="30" filter="url(#dN)" opacity=".35"/>
<g filter="url(#dB2)"><ellipse cx="14" cy="62" rx="17" ry="13" fill="#d9c6c6"/><ellipse cx="8" cy="62" rx="8" ry="8" fill="#d89ac0"/><ellipse cx="20" cy="58" rx="6" ry="5" fill="#5a5050"/></g>
<g filter="url(#dB)">
<path d="M72 40 Q80 38 80 52 L80 70 L70 70Z" fill="#e4467a"/>
<path d="M55 24 Q60 14 66 22 Q78 30 76 50 Q74 62 62 58 Q66 80 58 92 L52 92 Q56 74 52 60 Q42 58 46 44 Q48 30 55 24Z" fill="#4a3826"/>
<path d="M50 30 Q62 26 74 36 Q70 50 58 52 Q48 48 50 30Z" fill="#8a6e4a" opacity=".7"/><g stroke="#1e1610" stroke-width="1.6" fill="none" opacity=".8"><path d="M50 34 Q60 30 72 38M48 40 Q60 36 75 44M47 46 Q60 42 75 50M48 52 Q60 50 72 56"/></g>
<path d="M55 60 Q60 56 64 60 L62 90 L54 92Z" fill="#1c1410"/>
<ellipse cx="59" cy="20" rx="4" ry="5" fill="#d8c294"/><ellipse cx="61" cy="23" rx="2.6" ry="3" fill="#5a3a28"/>
<path d="M70 66 L93 66 L93 69 L90 69 L90 82 L88 82 L88 70 L74 70 L74 84 L72 84 L72 69 L70 69Z" fill="#351a1c"/>
<path d="M82 52 L88 52 L90 58 L80 58Z" fill="#e8a0a0"/><rect x="84.5" y="58" width="1.2" height="8" fill="#5a3030"/>
</g>
<g fill="#7a8aa8" opacity=".8"><rect x="1" y="14" width="1.6" height="9"/><rect x="18" y="27" width="1.4" height="6"/><rect x="43" y="10" width="1.2" height="5"/><rect x="73" y="13" width="1.2" height="5"/></g>

<rect x="0" y="72.2" width="95.4" height="24.20" fill="#000" fill-opacity=".52"/>
<g font-family="Liberation Sans, sans-serif" font-size="9.7" fill="#fff" stroke="#fff" stroke-width=".25"><text x="3.8" y="82.4">MEGA BBL</text><text x="3.8" y="92.4">Theodora</text></g>
</svg>
<svg class="abs" style="left:0.00px;top:286.70px" width="190.30" height="190.30" viewBox="0 0 191 191" preserveAspectRatio="none">
<defs>
<linearGradient id="eS" x1="0" x2="0" y1="0" y2="1"><stop offset="0" stop-color="#f9a61c"/><stop offset=".25" stop-color="#f88c1c"/><stop offset=".45" stop-color="#f2651f"/><stop offset=".6" stop-color="#ee4a1c"/><stop offset="1" stop-color="#e8431f"/></linearGradient>
<linearGradient id="eH" x1="0" x2="0" y1="0" y2="1"><stop offset="0" stop-color="#5f7e30"/><stop offset=".5" stop-color="#41602a"/><stop offset="1" stop-color="#2b431a"/></linearGradient>
<linearGradient id="eCl" x1="0" x2="0" y1="0" y2="1"><stop offset="0" stop-color="#fbf3d4"/><stop offset=".6" stop-color="#f1dfae"/><stop offset="1" stop-color="#e0a070"/></linearGradient>
<filter id="eB"><feGaussianBlur stdDeviation=".8"/></filter><filter id="eB2"><feGaussianBlur stdDeviation="2.5"/></filter>
</defs>
<rect width="191" height="191" fill="url(#eS)"/>
<path d="M152 60 Q168 34 191 22 L191 28 Q170 40 156 62Z" fill="#f9c8a8" opacity=".6" filter="url(#eB)"/>
<path d="M153.500 61 Q169 36 191 25" stroke="#b8d0a0" stroke-width="1.2" fill="none" opacity=".6"/>
<g filter="url(#eB)">
<g fill="url(#eCl)"><circle cx="14.0" cy="55.5" r="7.6"/><circle cx="21.0" cy="52.4" r="11.9"/><circle cx="28.0" cy="48.4" r="15.5"/><circle cx="35.0" cy="49.8" r="16.7"/><circle cx="42.0" cy="47.1" r="18.7"/><circle cx="49.0" cy="44.5" r="18.3"/><circle cx="56.0" cy="49.0" r="15.4"/><circle cx="63.0" cy="50.9" r="12.9"/><circle cx="70.0" cy="54.8" r="8.6"/><circle cx="45.4" cy="40.5" r="11.2"/><circle cx="40.1" cy="42.1" r="10.3"/><circle cx="36.4" cy="40.4" r="11.3"/><circle cx="43.4" cy="41.0" r="7.5"/></g><g fill="url(#eCl)"><circle cx="61.0" cy="32.4" r="4.4"/><circle cx="66.7" cy="29.8" r="7.2"/><circle cx="72.3" cy="29.0" r="7.6"/><circle cx="78.0" cy="27.8" r="8.9"/><circle cx="83.7" cy="28.4" r="8.2"/><circle cx="89.3" cy="30.5" r="7.4"/><circle cx="95.0" cy="33.0" r="3.3"/><circle cx="85.9" cy="25.4" r="4.2"/><circle cx="79.6" cy="25.7" r="4.4"/><circle cx="74.8" cy="25.0" r="4.5"/><circle cx="74.6" cy="24.4" r="4.5"/></g><g fill="url(#eCl)"><circle cx="119.0" cy="90.5" r="9.1"/><circle cx="126.2" cy="85.7" r="15.9"/><circle cx="133.5" cy="81.4" r="18.3"/><circle cx="140.8" cy="82.7" r="20.4"/><circle cx="148.0" cy="78.6" r="21.5"/><circle cx="155.2" cy="82.0" r="20.1"/><circle cx="162.5" cy="81.1" r="18.5"/><circle cx="169.8" cy="84.7" r="15.3"/><circle cx="177.0" cy="90.3" r="9.4"/><circle cx="152.4" cy="73.0" r="13.1"/><circle cx="140.0" cy="72.4" r="9.6"/><circle cx="139.0" cy="70.2" r="12.8"/><circle cx="138.8" cy="70.4" r="10.3"/></g>
</g>
<!-- hills -->
<path d="M0 112 Q14 104 28 108 Q50 118 70 122 Q84 126 96 120 L116 116 Q140 120 160 112 Q176 106 191 110 L191 191 L0 191Z" fill="url(#eH)"/>
<path d="M0 112 Q14 104 28 108 Q50 118 70 122 Q84 126 96 120 L116 116 Q140 120 160 112 Q176 106 191 110" stroke="#66688a" stroke-width="2.5" fill="none" opacity=".55" filter="url(#eB)"/>
<path d="M0 128 Q30 120 60 138 Q78 150 72 166 L0 178Z" fill="#4d7028" opacity=".85" filter="url(#eB)"/>
<path d="M116 120 Q150 116 191 124 L191 140 L110 142Z" fill="#7a9a3e" opacity=".7" filter="url(#eB2)"/>
<path d="M0 150 Q30 140 56 156 L40 191 L0 191Z" fill="#2c4418" opacity=".6" filter="url(#eB2)"/>
<path d="M30 158 Q56 150 72 138" stroke="#c89a52" stroke-width="1.5" fill="none"/>
<path d="M30 191 L36 172 L44 164 L62 158 L78 160 L104 158 L108 148 Q140 138 191 138 L191 191Z" fill="#2a3612"/>
<g filter="url(#eB)"><circle cx="119.9" cy="144.0" r="2.8" fill="#f3ae1a"/><circle cx="119.9" cy="144.0" r="1.7" fill="#c9780e"/><circle cx="119.9" cy="144.0" r="1.3" fill="#2a1706"/><circle cx="125.5" cy="142.9" r="2.8" fill="#f3ae1a"/><circle cx="125.5" cy="142.9" r="1.7" fill="#c9780e"/><circle cx="125.5" cy="142.9" r="1.3" fill="#2a1706"/><circle cx="131.1" cy="143.0" r="2.8" fill="#f3ae1a"/><circle cx="131.1" cy="143.0" r="1.7" fill="#c9780e"/><circle cx="131.1" cy="143.0" r="1.3" fill="#2a1706"/><circle cx="136.7" cy="143.2" r="2.8" fill="#f3ae1a"/><circle cx="136.7" cy="143.2" r="1.7" fill="#c9780e"/><circle cx="136.7" cy="143.2" r="1.3" fill="#2a1706"/><circle cx="142.3" cy="142.2" r="2.8" fill="#f3ae1a"/><circle cx="142.3" cy="142.2" r="1.7" fill="#c9780e"/><circle cx="142.3" cy="142.2" r="1.3" fill="#2a1706"/><circle cx="147.9" cy="143.0" r="2.8" fill="#f3ae1a"/><circle cx="147.9" cy="143.0" r="1.7" fill="#c9780e"/><circle cx="147.9" cy="143.0" r="1.3" fill="#2a1706"/><circle cx="153.5" cy="143.3" r="2.8" fill="#f3ae1a"/><circle cx="153.5" cy="143.3" r="1.7" fill="#c9780e"/><circle cx="153.5" cy="143.3" r="1.3" fill="#2a1706"/><circle cx="159.1" cy="143.7" r="2.8" fill="#f3ae1a"/><circle cx="159.1" cy="143.7" r="1.7" fill="#c9780e"/><circle cx="159.1" cy="143.7" r="1.3" fill="#2a1706"/><circle cx="164.7" cy="142.0" r="2.8" fill="#f3ae1a"/><circle cx="164.7" cy="142.0" r="1.7" fill="#c9780e"/><circle cx="164.7" cy="142.0" r="1.3" fill="#2a1706"/><circle cx="170.3" cy="142.5" r="2.8" fill="#f3ae1a"/><circle cx="170.3" cy="142.5" r="1.7" fill="#c9780e"/><circle cx="170.3" cy="142.5" r="1.3" fill="#2a1706"/><circle cx="175.9" cy="142.0" r="2.8" fill="#f3ae1a"/><circle cx="175.9" cy="142.0" r="1.7" fill="#c9780e"/><circle cx="175.9" cy="142.0" r="1.3" fill="#2a1706"/><circle cx="181.5" cy="143.7" r="2.8" fill="#f3ae1a"/><circle cx="181.5" cy="143.7" r="1.7" fill="#c9780e"/><circle cx="181.5" cy="143.7" r="1.3" fill="#2a1706"/><circle cx="187.1" cy="143.5" r="2.8" fill="#f3ae1a"/><circle cx="187.1" cy="143.5" r="1.7" fill="#c9780e"/><circle cx="187.1" cy="143.5" r="1.3" fill="#2a1706"/><circle cx="192.7" cy="141.9" r="2.8" fill="#f3ae1a"/><circle cx="192.7" cy="141.9" r="1.7" fill="#c9780e"/><circle cx="192.7" cy="141.9" r="1.3" fill="#2a1706"/><circle cx="120.7" cy="148.4" r="3.6" fill="#f3ae1a"/><circle cx="120.7" cy="148.4" r="2.2" fill="#c9780e"/><circle cx="120.7" cy="148.4" r="1.6" fill="#2a1706"/><circle cx="127.9" cy="148.3" r="3.6" fill="#f3ae1a"/><circle cx="127.9" cy="148.3" r="2.2" fill="#c9780e"/><circle cx="127.9" cy="148.3" r="1.6" fill="#2a1706"/><circle cx="135.1" cy="147.2" r="3.6" fill="#f3ae1a"/><circle cx="135.1" cy="147.2" r="2.2" fill="#c9780e"/><circle cx="135.1" cy="147.2" r="1.6" fill="#2a1706"/><circle cx="142.3" cy="146.8" r="3.6" fill="#f3ae1a"/><circle cx="142.3" cy="146.8" r="2.2" fill="#c9780e"/><circle cx="142.3" cy="146.8" r="1.6" fill="#2a1706"/><circle cx="149.5" cy="148.1" r="3.6" fill="#f3ae1a"/><circle cx="149.5" cy="148.1" r="2.2" fill="#c9780e"/><circle cx="149.5" cy="148.1" r="1.6" fill="#2a1706"/><circle cx="156.7" cy="146.9" r="3.6" fill="#f3ae1a"/><circle cx="156.7" cy="146.9" r="2.2" fill="#c9780e"/><circle cx="156.7" cy="146.9" r="1.6" fill="#2a1706"/><circle cx="163.9" cy="147.3" r="3.6" fill="#f3ae1a"/><circle cx="163.9" cy="147.3" r="2.2" fill="#c9780e"/><circle cx="163.9" cy="147.3" r="1.6" fill="#2a1706"/><circle cx="171.1" cy="147.4" r="3.6" fill="#f3ae1a"/><circle cx="171.1" cy="147.4" r="2.2" fill="#c9780e"/><circle cx="171.1" cy="147.4" r="1.6" fill="#2a1706"/><circle cx="178.3" cy="146.9" r="3.6" fill="#f3ae1a"/><circle cx="178.3" cy="146.9" r="2.2" fill="#c9780e"/><circle cx="178.3" cy="146.9" r="1.6" fill="#2a1706"/><circle cx="185.5" cy="147.9" r="3.6" fill="#f3ae1a"/><circle cx="185.5" cy="147.9" r="2.2" fill="#c9780e"/><circle cx="185.5" cy="147.9" r="1.6" fill="#2a1706"/><circle cx="192.7" cy="147.9" r="3.6" fill="#f3ae1a"/><circle cx="192.7" cy="147.9" r="2.2" fill="#c9780e"/><circle cx="192.7" cy="147.9" r="1.6" fill="#2a1706"/><circle cx="121.1" cy="154.8" r="4.6" fill="#f3ae1a"/><circle cx="121.1" cy="154.8" r="2.8" fill="#c9780e"/><circle cx="121.1" cy="154.8" r="2.1" fill="#2a1706"/><circle cx="130.3" cy="154.5" r="4.6" fill="#f3ae1a"/><circle cx="130.3" cy="154.5" r="2.8" fill="#c9780e"/><circle cx="130.3" cy="154.5" r="2.1" fill="#2a1706"/><circle cx="139.5" cy="154.9" r="4.6" fill="#f3ae1a"/><circle cx="139.5" cy="154.9" r="2.8" fill="#c9780e"/><circle cx="139.5" cy="154.9" r="2.1" fill="#2a1706"/><circle cx="148.7" cy="154.4" r="4.6" fill="#f3ae1a"/><circle cx="148.7" cy="154.4" r="2.8" fill="#c9780e"/><circle cx="148.7" cy="154.4" r="2.1" fill="#2a1706"/><circle cx="157.9" cy="154.0" r="4.6" fill="#f3ae1a"/><circle cx="157.9" cy="154.0" r="2.8" fill="#c9780e"/><circle cx="157.9" cy="154.0" r="2.1" fill="#2a1706"/><circle cx="167.1" cy="155.7" r="4.6" fill="#f3ae1a"/><circle cx="167.1" cy="155.7" r="2.8" fill="#c9780e"/><circle cx="167.1" cy="155.7" r="2.1" fill="#2a1706"/><circle cx="176.3" cy="155.7" r="4.6" fill="#f3ae1a"/><circle cx="176.3" cy="155.7" r="2.8" fill="#c9780e"/><circle cx="176.3" cy="155.7" r="2.1" fill="#2a1706"/><circle cx="185.5" cy="155.3" r="4.6" fill="#f3ae1a"/><circle cx="185.5" cy="155.3" r="2.8" fill="#c9780e"/><circle cx="185.5" cy="155.3" r="2.1" fill="#2a1706"/><circle cx="194.7" cy="155.0" r="4.6" fill="#f3ae1a"/><circle cx="194.7" cy="155.0" r="2.8" fill="#c9780e"/><circle cx="194.7" cy="155.0" r="2.1" fill="#2a1706"/><circle cx="41.9" cy="161.4" r="6.0" fill="#f3ae1a"/><circle cx="41.9" cy="161.4" r="3.6" fill="#c9780e"/><circle cx="41.9" cy="161.4" r="2.7" fill="#2a1706"/><circle cx="53.9" cy="161.5" r="6.0" fill="#f3ae1a"/><circle cx="53.9" cy="161.5" r="3.6" fill="#c9780e"/><circle cx="53.9" cy="161.5" r="2.7" fill="#2a1706"/><circle cx="65.9" cy="161.0" r="6.0" fill="#f3ae1a"/><circle cx="65.9" cy="161.0" r="3.6" fill="#c9780e"/><circle cx="65.9" cy="161.0" r="2.7" fill="#2a1706"/><circle cx="77.9" cy="162.6" r="6.0" fill="#f3ae1a"/><circle cx="77.9" cy="162.6" r="3.6" fill="#c9780e"/><circle cx="77.9" cy="162.6" r="2.7" fill="#2a1706"/><circle cx="125.9" cy="163.1" r="6.0" fill="#f3ae1a"/><circle cx="125.9" cy="163.1" r="3.6" fill="#c9780e"/><circle cx="125.9" cy="163.1" r="2.7" fill="#2a1706"/><circle cx="137.9" cy="162.8" r="6.0" fill="#f3ae1a"/><circle cx="137.9" cy="162.8" r="3.6" fill="#c9780e"/><circle cx="137.9" cy="162.8" r="2.7" fill="#2a1706"/><circle cx="149.9" cy="160.8" r="6.0" fill="#f3ae1a"/><circle cx="149.9" cy="160.8" r="3.6" fill="#c9780e"/><circle cx="149.9" cy="160.8" r="2.7" fill="#2a1706"/><circle cx="161.9" cy="161.3" r="6.0" fill="#f3ae1a"/><circle cx="161.9" cy="161.3" r="3.6" fill="#c9780e"/><circle cx="161.9" cy="161.3" r="2.7" fill="#2a1706"/><circle cx="173.9" cy="163.0" r="6.0" fill="#f3ae1a"/><circle cx="173.9" cy="163.0" r="3.6" fill="#c9780e"/><circle cx="173.9" cy="163.0" r="2.7" fill="#2a1706"/><circle cx="185.9" cy="161.9" r="6.0" fill="#f3ae1a"/><circle cx="185.9" cy="161.9" r="3.6" fill="#c9780e"/><circle cx="185.9" cy="161.9" r="2.7" fill="#2a1706"/><circle cx="44.8" cy="171.8" r="9.0" fill="#f3ae1a"/><circle cx="44.8" cy="171.8" r="5.4" fill="#c9780e"/><circle cx="44.8" cy="171.8" r="4.0" fill="#2a1706"/><circle cx="62.8" cy="171.0" r="9.0" fill="#f3ae1a"/><circle cx="62.8" cy="171.0" r="5.4" fill="#c9780e"/><circle cx="62.8" cy="171.0" r="4.0" fill="#2a1706"/><circle cx="134.8" cy="171.0" r="9.0" fill="#f3ae1a"/><circle cx="134.8" cy="171.0" r="5.4" fill="#c9780e"/><circle cx="134.8" cy="171.0" r="4.0" fill="#2a1706"/><circle cx="152.8" cy="171.6" r="9.0" fill="#f3ae1a"/><circle cx="152.8" cy="171.6" r="5.4" fill="#c9780e"/><circle cx="152.8" cy="171.6" r="4.0" fill="#2a1706"/><circle cx="170.8" cy="173.1" r="9.0" fill="#f3ae1a"/><circle cx="170.8" cy="173.1" r="5.4" fill="#c9780e"/><circle cx="170.8" cy="173.1" r="4.0" fill="#2a1706"/><circle cx="188.8" cy="172.6" r="9.0" fill="#f3ae1a"/><circle cx="188.8" cy="172.6" r="5.4" fill="#c9780e"/><circle cx="188.8" cy="172.6" r="4.0" fill="#2a1706"/><circle cx="31.4" cy="185.4" r="11.5" fill="#f3ae1a"/><circle cx="31.4" cy="185.4" r="6.9" fill="#c9780e"/><circle cx="31.4" cy="185.4" r="5.2" fill="#2a1706"/><circle cx="54.4" cy="185.0" r="11.5" fill="#f3ae1a"/><circle cx="54.4" cy="185.0" r="6.9" fill="#c9780e"/><circle cx="54.4" cy="185.0" r="5.2" fill="#2a1706"/><circle cx="77.4" cy="184.9" r="11.5" fill="#f3ae1a"/><circle cx="77.4" cy="184.9" r="6.9" fill="#c9780e"/><circle cx="77.4" cy="184.9" r="5.2" fill="#2a1706"/><circle cx="100.4" cy="186.7" r="11.5" fill="#f3ae1a"/><circle cx="100.4" cy="186.7" r="6.9" fill="#c9780e"/><circle cx="100.4" cy="186.7" r="5.2" fill="#2a1706"/><circle cx="123.4" cy="185.2" r="11.5" fill="#f3ae1a"/><circle cx="123.4" cy="185.2" r="6.9" fill="#c9780e"/><circle cx="123.4" cy="185.2" r="5.2" fill="#2a1706"/><circle cx="146.4" cy="186.1" r="11.5" fill="#f3ae1a"/><circle cx="146.4" cy="186.1" r="6.9" fill="#c9780e"/><circle cx="146.4" cy="186.1" r="5.2" fill="#2a1706"/><circle cx="169.4" cy="185.9" r="11.5" fill="#f3ae1a"/><circle cx="169.4" cy="185.9" r="6.9" fill="#c9780e"/><circle cx="169.4" cy="185.9" r="5.2" fill="#2a1706"/><circle cx="192.4" cy="185.3" r="11.5" fill="#f3ae1a"/><circle cx="192.4" cy="185.3" r="6.9" fill="#c9780e"/><circle cx="192.4" cy="185.3" r="5.2" fill="#2a1706"/></g>
<g filter="url(#eB)"><g transform="translate(33 101) scale(1.0)"><path d="M-2 -9 Q4 -36 20 -32 Q18 -14 4 -7Z" fill="#f8ead6" opacity=".85"/><path d="M-10 -8 Q-12 -30 2 -32 Q4 -16 -4 -7Z" fill="#f3e0c8" opacity=".7"/><ellipse cx="0" cy="0" rx="18" ry="11.500" fill="#20160a"/><ellipse cx="-7" cy="-1" rx="4.600" ry="10.500" fill="#ecc31e"/><ellipse cx="6" cy="1" rx="4.200" ry="10" fill="#ecc31e"/><circle cx="15" cy="2" r="5" fill="#1a1208"/></g><g transform="translate(136 23) scale(0.55) scale(-1 1)"><path d="M-2 -9 Q4 -36 20 -32 Q18 -14 4 -7Z" fill="#f8ead6" opacity=".85"/><path d="M-10 -8 Q-12 -30 2 -32 Q4 -16 -4 -7Z" fill="#f3e0c8" opacity=".7"/><ellipse cx="0" cy="0" rx="18" ry="11.500" fill="#20160a"/><ellipse cx="-7" cy="-1" rx="4.600" ry="10.500" fill="#ecc31e"/><ellipse cx="6" cy="1" rx="4.200" ry="10" fill="#ecc31e"/><circle cx="15" cy="2" r="5" fill="#1a1208"/></g><g transform="translate(24 14) scale(0.36) scale(-1 1)"><path d="M-2 -9 Q4 -36 20 -32 Q18 -14 4 -7Z" fill="#f8ead6" opacity=".85"/><path d="M-10 -8 Q-12 -30 2 -32 Q4 -16 -4 -7Z" fill="#f3e0c8" opacity=".7"/><ellipse cx="0" cy="0" rx="18" ry="11.500" fill="#20160a"/><ellipse cx="-7" cy="-1" rx="4.600" ry="10.500" fill="#ecc31e"/><ellipse cx="6" cy="1" rx="4.200" ry="10" fill="#ecc31e"/><circle cx="15" cy="2" r="5" fill="#1a1208"/></g><g transform="translate(7 36) scale(0.45)"><path d="M-2 -9 Q4 -36 20 -32 Q18 -14 4 -7Z" fill="#f8ead6" opacity=".85"/><path d="M-10 -8 Q-12 -30 2 -32 Q4 -16 -4 -7Z" fill="#f3e0c8" opacity=".7"/><ellipse cx="0" cy="0" rx="18" ry="11.500" fill="#20160a"/><ellipse cx="-7" cy="-1" rx="4.600" ry="10.500" fill="#ecc31e"/><ellipse cx="6" cy="1" rx="4.200" ry="10" fill="#ecc31e"/><circle cx="15" cy="2" r="5" fill="#1a1208"/></g><g transform="translate(76 83) scale(0.4) scale(-1 1)"><path d="M-2 -9 Q4 -36 20 -32 Q18 -14 4 -7Z" fill="#f8ead6" opacity=".85"/><path d="M-10 -8 Q-12 -30 2 -32 Q4 -16 -4 -7Z" fill="#f3e0c8" opacity=".7"/><ellipse cx="0" cy="0" rx="18" ry="11.500" fill="#20160a"/><ellipse cx="-7" cy="-1" rx="4.600" ry="10.500" fill="#ecc31e"/><ellipse cx="6" cy="1" rx="4.200" ry="10" fill="#ecc31e"/><circle cx="15" cy="2" r="5" fill="#1a1208"/></g><g transform="translate(122 116) scale(0.45)"><path d="M-2 -9 Q4 -36 20 -32 Q18 -14 4 -7Z" fill="#f8ead6" opacity=".85"/><path d="M-10 -8 Q-12 -30 2 -32 Q4 -16 -4 -7Z" fill="#f3e0c8" opacity=".7"/><ellipse cx="0" cy="0" rx="18" ry="11.500" fill="#20160a"/><ellipse cx="-7" cy="-1" rx="4.600" ry="10.500" fill="#ecc31e"/><ellipse cx="6" cy="1" rx="4.200" ry="10" fill="#ecc31e"/><circle cx="15" cy="2" r="5" fill="#1a1208"/></g><g transform="translate(179 71) scale(0.36) scale(-1 1)"><path d="M-2 -9 Q4 -36 20 -32 Q18 -14 4 -7Z" fill="#f8ead6" opacity=".85"/><path d="M-10 -8 Q-12 -30 2 -32 Q4 -16 -4 -7Z" fill="#f3e0c8" opacity=".7"/><ellipse cx="0" cy="0" rx="18" ry="11.500" fill="#20160a"/><ellipse cx="-7" cy="-1" rx="4.600" ry="10.500" fill="#ecc31e"/><ellipse cx="6" cy="1" rx="4.200" ry="10" fill="#ecc31e"/><circle cx="15" cy="2" r="5" fill="#1a1208"/></g><g transform="translate(143 103) scale(0.3)"><path d="M-2 -9 Q4 -36 20 -32 Q18 -14 4 -7Z" fill="#f8ead6" opacity=".85"/><path d="M-10 -8 Q-12 -30 2 -32 Q4 -16 -4 -7Z" fill="#f3e0c8" opacity=".7"/><ellipse cx="0" cy="0" rx="18" ry="11.500" fill="#20160a"/><ellipse cx="-7" cy="-1" rx="4.600" ry="10.500" fill="#ecc31e"/><ellipse cx="6" cy="1" rx="4.200" ry="10" fill="#ecc31e"/><circle cx="15" cy="2" r="5" fill="#1a1208"/></g><g transform="translate(163 7) scale(0.4) scale(-1 1)"><path d="M-2 -9 Q4 -36 20 -32 Q18 -14 4 -7Z" fill="#f8ead6" opacity=".85"/><path d="M-10 -8 Q-12 -30 2 -32 Q4 -16 -4 -7Z" fill="#f3e0c8" opacity=".7"/><ellipse cx="0" cy="0" rx="18" ry="11.500" fill="#20160a"/><ellipse cx="-7" cy="-1" rx="4.600" ry="10.500" fill="#ecc31e"/><ellipse cx="6" cy="1" rx="4.200" ry="10" fill="#ecc31e"/><circle cx="15" cy="2" r="5" fill="#1a1208"/></g></g>
<!-- figure -->
<g filter="url(#eB)">
<path d="M83 134 L81 176 Q83 188 90 191 L113 191 Q117 170 115 134Z" fill="#24371b"/>
<path d="M79 86 Q83 72 98 69 Q113 68 119 80 Q123 100 119 138 Q100 144 81 138 Q84 112 77 104Z" fill="#dedcd8"/>
<path d="M100 70 Q112 70 119 80 Q123 100 119 136 Q112 120 108 96Z" fill="#b4b2ae" opacity=".75"/>
<path d="M80 88 Q71 98 71 108 Q78 114 86 107 L88 95Z" fill="#5a3018"/>
<ellipse cx="97" cy="60" rx="9" ry="9.500" fill="#5a3420"/>
<ellipse cx="92" cy="62" rx="10" ry="7" fill="#ece4cc"/><ellipse cx="95" cy="63" rx="5" ry="5" fill="#e4bc18"/><ellipse cx="88" cy="60" rx="4" ry="3" fill="#2a1c0c"/>
<path d="M82 50 Q84 39 98 39 Q111 41 111 52 L86 52.500Z" fill="#1f8a50"/><path d="M81 50 Q84 46 91 47.500 L88 52.500Z" fill="#14643a"/>
</g>

<rect x="0" y="167.8" width="191" height="24.22" fill="#000" fill-opacity=".52"/>
<g font-family="Liberation Sans, sans-serif" font-size="9.7" fill="#fff" stroke="#fff" stroke-width=".25"><text x="3.8" y="178.0">Scum Fuck Flower Boy</text><text x="3.8" y="188.0">Tyler, The Creator</text></g>
</svg>
<svg class="abs" style="left:191.30px;top:286.70px" width="94.40" height="94.40" viewBox="0 0 95.4 95.4" preserveAspectRatio="none">
<defs>
<linearGradient id="fBg" x1="0" x2="1" y1="0" y2="1"><stop offset="0" stop-color="#16112a"/><stop offset=".5" stop-color="#110d1e"/><stop offset="1" stop-color="#1b1630"/></linearGradient>
<linearGradient id="fD" x1="0" x2="1" y1="0" y2="1"><stop offset="0" stop-color="#9a3216"/><stop offset="1" stop-color="#5a150d"/></linearGradient>
<filter id="fB"><feGaussianBlur stdDeviation=".7"/></filter>
</defs>
<rect width="95.4" height="95.4" fill="url(#fBg)"/>
<rect x="0" y="0" width="10" height="95.4" fill="#1d1838" opacity=".6"/>
<rect x="69" y="22" width="14.5" height="27" fill="url(#fD)"/>
<path d="M69 22 L83.5 22 L83.5 26 L72 26 L72 49 L69 49Z" fill="#5a1a10"/>
<g fill="#241e3a"><rect x="54" y="49" width="42" height="8"/><rect x="54" y="58" width="30" height="7" fill="#2e2748"/><rect x="54" y="66" width="28" height="7" fill="#282140"/><rect x="54" y="74" width="28" height="7" fill="#221c38"/><rect x="54" y="82" width="28" height="14" fill="#1c172e"/></g>
<path d="M46 56 Q50 40 60 36 Q66 34 70 36" stroke="#2a2340" stroke-width="1.5" fill="none"/>
<g filter="url(#fB)">
<path d="M10 10 Q16 12 20 20 Q22 14 32 9 Q30 18 26 22 Q27 28 24 29 Q20 29 21 24 Q14 20 10 10Z" fill="#efefef"/>
<path d="M30 44 Q34 38 40 40 Q46 44 44 54 Q40 58 36 56 Q28 54 30 44Z" fill="#4a2e22"/>
<ellipse cx="38" cy="49" rx="3.6" ry="4.6" fill="#c39a80"/>
<path d="M0 72 Q14 62 24 56 Q30 52 34 56 Q40 60 42 66 Q40 72 30 76 L22 82 Q10 86 0 84Z" fill="#e9e4e6"/>
<path d="M30 56 Q36 54 40 58 L40 66 Q36 64 32 62Z" fill="#c8a088"/>
<path d="M38 58 Q48 54 56 57 L56 60 Q48 60 42 63 L40 68 L37 66Z" fill="#c9a086"/>
<path d="M16 66 Q20 60 26 58 L34 72 L24 78Z" fill="#c49a82" opacity=".7"/>
<path d="M40 64 L52 62 L54 96 L30 96 Q34 80 40 64Z" fill="#17122a"/>
</g>

<rect x="0" y="72.2" width="95.4" height="24.20" fill="#000" fill-opacity=".52"/>
<g font-family="Liberation Sans, sans-serif" font-size="9.7" fill="#fff" stroke="#fff" stroke-width=".25"><text x="3.8" y="82.4">Heaven knows</text><text x="3.8" y="92.4">PinkPantheress</text></g>
</svg>
<svg class="abs" style="left:286.70px;top:286.70px" width="94.40" height="94.40" viewBox="0 0 95.4 95.4" preserveAspectRatio="none">
<defs>
<filter id="gB"><feGaussianBlur stdDeviation=".6"/></filter>
<filter id="gN" x="0" y="0" width="100%" height="100%"><feTurbulence type="turbulence" baseFrequency=".09" numOctaves="3" seed="11"/><feColorMatrix type="matrix" values="0 0 0 0 .35  0 0 0 0 .32  0 0 0 0 .28  0 2.2 0 0 -.55"/><feComposite in2="SourceGraphic" operator="in"/></filter>
</defs>
<rect width="95.4" height="95.4" fill="#d8ccb0"/>
<rect width="4.5" height="95.4" fill="#a8804e"/>
<path d="M58 0 L95.4 0 L95.4 54 L88 52 Q92 44 86 40 Q92 34 86 28 Q78 26 74 18 Q66 16 62 10 Q58 6 58 0Z" fill="#df452c"/>
<g filter="url(#gB)">
<circle cx="76" cy="12" r="10" fill="#d9ccb0"/><path d="M84 18 Q94 22 90 32 Q84 30 84 18Z" fill="#6ec0b0"/><path d="M60 8 Q66 6 68 14 Q62 16 60 8Z" fill="#d8c838"/>
<path d="M8 34 Q16 28 26 30 Q30 24 40 20 Q56 16 66 26 Q80 34 82 52 Q84 66 74 76 Q60 88 40 84 Q22 80 14 64 Q8 52 12 44Z" fill="#d2c6a8"/>
<rect x="6" y="18" width="84" height="68" filter="url(#gN)"/>
<circle cx="42" cy="28" r="9.5" fill="#9a9a78"/><circle cx="42" cy="28" r="6.5" fill="#b8b48a"/><circle cx="42" cy="28" r="3" fill="#7a8a6a"/>
<path d="M8 32 Q14 28 22 31 Q18 36 10 36Z" fill="#7ab0a8"/>
<g fill="none" stroke-width="1.1"><path d="M20 40 Q30 60 26 78" stroke="#d84030"/><path d="M30 36 Q44 56 40 80" stroke="#4aa8a0"/><path d="M50 40 Q62 56 56 78" stroke="#d8c030"/><path d="M34 44 Q50 50 66 44" stroke="#d84030"/><path d="M28 62 Q48 70 72 60" stroke="#4aa8a0"/><path d="M60 34 Q74 44 72 64" stroke="#d84030"/><path d="M16 50 Q24 56 22 68" stroke="#333"/><path d="M44 60 Q58 66 68 76" stroke="#c8b828"/></g>
<path d="M66 60 Q78 56 84 50 L86 56 Q80 64 70 66Z" fill="#d8c838"/><g fill="none" opacity=".85"><path d="M33.4 35.6 Q27.9 42.2 16.6 38.7" stroke="#d84030" stroke-width="1.1"/><path d="M45.8 38.6 Q47.2 44.6 51.7 41.8" stroke="#8a6a3a" stroke-width="0.9"/><path d="M39.6 49.1 Q47.5 55.8 45.4 56.0" stroke="#d8c030" stroke-width="1.0"/><path d="M64.4 61.1 Q75.7 57.7 75.6 66.1" stroke="#333" stroke-width="1.2"/><path d="M48.8 60.8 Q57.5 65.4 57.2 66.9" stroke="#d8c030" stroke-width="1.2"/><path d="M28.4 20.9 Q32.2 24.4 39.3 35.8" stroke="#d8c030" stroke-width="0.7"/><path d="M33.0 69.3 Q33.4 70.8 28.8 82.8" stroke="#6a9a8a" stroke-width="1.1"/><path d="M30.9 50.8 Q21.7 61.6 23.2 61.0" stroke="#d84030" stroke-width="1.2"/><path d="M30.7 61.3 Q31.0 72.0 34.2 74.5" stroke="#222" stroke-width="0.5"/><path d="M63.1 75.8 Q65.1 84.1 56.8 81.9" stroke="#6a9a8a" stroke-width="0.9"/><path d="M61.0 39.3 Q62.7 43.7 57.6 51.2" stroke="#c05a3a" stroke-width="0.5"/><path d="M57.5 46.1 Q60.7 49.3 53.8 56.2" stroke="#4aa8a0" stroke-width="0.7"/><path d="M37.0 63.2 Q42.4 70.7 43.3 66.4" stroke="#d8c030" stroke-width="1.0"/><path d="M59.6 63.6 Q71.9 62.7 78.4 65.5" stroke="#c05a3a" stroke-width="0.8"/><path d="M29.6 56.2 Q38.8 61.2 48.3 58.1" stroke="#d8c030" stroke-width="1.2"/><path d="M32.1 41.1 Q30.6 48.5 37.1 58.9" stroke="#d84030" stroke-width="1.1"/><path d="M48.6 67.6 Q45.4 71.5 30.7 76.6" stroke="#222" stroke-width="1.0"/><path d="M44.6 65.4 Q34.0 71.2 32.7 69.3" stroke="#d8c030" stroke-width="0.9"/><path d="M23.8 51.3 Q29.6 58.5 28.6 56.8" stroke="#6a9a8a" stroke-width="0.5"/><path d="M44.6 37.2 Q49.3 38.7 58.7 38.7" stroke="#c05a3a" stroke-width="1.1"/><path d="M50.8 80.5 Q40.9 77.8 34.9 82.7" stroke="#d84030" stroke-width="0.8"/><path d="M45.9 34.3 Q48.9 40.3 51.9 42.1" stroke="#6a9a8a" stroke-width="0.7"/><path d="M24.0 27.2 Q32.1 39.5 32.0 42.9" stroke="#222" stroke-width="1.2"/><path d="M63.8 45.2 Q73.6 53.8 75.4 51.9" stroke="#222" stroke-width="0.7"/><path d="M72.6 59.4 Q75.7 65.1 68.4 70.4" stroke="#8a6a3a" stroke-width="0.7"/><path d="M21.0 45.4 Q12.4 46.5 11.2 45.5" stroke="#d8c030" stroke-width="0.7"/><path d="M35.1 30.3 Q32.1 28.2 35.7 36.8" stroke="#d8c030" stroke-width="0.6"/><path d="M67.4 43.5 Q67.4 52.1 70.9 56.7" stroke="#4aa8a0" stroke-width="0.9"/><path d="M47.6 77.7 Q45.8 79.5 49.3 83.4" stroke="#4aa8a0" stroke-width="1.0"/><path d="M10.1 40.4 Q11.6 46.1 18.1 51.5" stroke="#c05a3a" stroke-width="1.2"/><path d="M58.9 29.7 Q53.6 33.2 51.4 45.4" stroke="#8a6a3a" stroke-width="0.9"/><path d="M75.0 40.2 Q83.0 40.7 81.5 53.2" stroke="#4aa8a0" stroke-width="0.7"/><path d="M72.5 41.7 Q68.4 42.8 62.7 45.7" stroke="#333" stroke-width="0.8"/><path d="M22.7 54.5 Q13.5 58.1 12.5 59.5" stroke="#c05a3a" stroke-width="0.8"/><path d="M29.2 52.1 Q26.9 61.7 29.7 71.9" stroke="#4aa8a0" stroke-width="1.0"/><path d="M59.4 49.3 Q61.0 50.4 65.3 52.0" stroke="#c05a3a" stroke-width="0.7"/><path d="M45.2 51.8 Q42.2 52.3 33.9 57.9" stroke="#222" stroke-width="0.9"/><path d="M24.0 52.4 Q14.5 60.7 14.0 62.8" stroke="#c05a3a" stroke-width="0.7"/><path d="M31.0 32.1 Q37.3 35.0 47.1 33.5" stroke="#d8c030" stroke-width="0.5"/><path d="M54.5 69.7 Q46.2 67.1 36.8 76.1" stroke="#8a6a3a" stroke-width="0.9"/><path d="M40.4 25.4 Q37.7 28.4 26.8 31.9" stroke="#333" stroke-width="1.1"/><path d="M12.0 59.3 Q20.5 60.3 22.2 59.4" stroke="#222" stroke-width="1.1"/><path d="M60.6 62.3 Q58.7 65.0 60.7 76.0" stroke="#d84030" stroke-width="0.5"/><path d="M54.1 71.7 Q44.2 81.8 45.7 86.6" stroke="#4aa8a0" stroke-width="1.2"/><path d="M36.9 42.4 Q45.5 53.5 50.6 53.7" stroke="#d8c030" stroke-width="1.2"/><path d="M36.3 33.8 Q43.5 31.0 43.4 38.5" stroke="#333" stroke-width="0.5"/><path d="M58.8 64.2 Q63.2 67.7 65.7 65.5" stroke="#d8c030" stroke-width="0.5"/><path d="M66.8 60.8 Q71.5 71.6 72.5 72.4" stroke="#d8c030" stroke-width="1.0"/><path d="M68.0 70.3 Q62.4 73.5 55.4 73.9" stroke="#c05a3a" stroke-width="0.5"/><path d="M53.8 79.1 Q52.5 83.8 43.8 79.8" stroke="#222" stroke-width="1.0"/><path d="M51.0 73.3 Q60.4 70.4 65.7 77.4" stroke="#4aa8a0" stroke-width="0.9"/><path d="M31.9 58.3 Q21.0 59.4 19.5 59.8" stroke="#8a6a3a" stroke-width="0.5"/><path d="M59.4 71.2 Q60.8 81.9 71.3 81.2" stroke="#222" stroke-width="1.1"/><path d="M59.1 67.3 Q61.2 72.4 67.2 74.7" stroke="#6a9a8a" stroke-width="1.1"/><path d="M21.9 66.1 Q26.7 76.0 28.5 74.9" stroke="#6a9a8a" stroke-width="0.9"/><path d="M21.9 34.6 Q19.7 36.7 27.1 50.1" stroke="#333" stroke-width="0.6"/><path d="M9.7 48.9 Q12.3 53.3 16.6 62.5" stroke="#8a6a3a" stroke-width="0.7"/><path d="M24.2 55.2 Q36.0 61.3 38.9 58.6" stroke="#222" stroke-width="0.6"/><path d="M43.0 65.5 Q42.4 68.5 48.1 72.0" stroke="#d84030" stroke-width="0.7"/><path d="M42.8 38.0 Q45.7 42.4 49.6 38.5" stroke="#d8c030" stroke-width="0.6"/><path d="M42.1 35.0 Q33.0 37.2 31.9 46.6" stroke="#d84030" stroke-width="0.9"/><path d="M36.9 28.2 Q33.4 31.9 25.5 43.2" stroke="#6a9a8a" stroke-width="0.7"/><path d="M39.8 27.6 Q44.9 35.7 45.8 33.3" stroke="#8a6a3a" stroke-width="1.0"/><path d="M46.3 67.7 Q39.0 67.3 39.7 78.1" stroke="#6a9a8a" stroke-width="1.2"/><path d="M34.3 38.2 Q42.2 42.9 50.8 43.1" stroke="#d84030" stroke-width="0.8"/><path d="M46.0 39.3 Q49.2 52.5 49.0 56.7" stroke="#333" stroke-width="0.6"/><path d="M18.0 51.3 Q22.2 48.3 30.9 54.8" stroke="#d8c030" stroke-width="0.9"/><path d="M56.2 40.7 Q55.6 44.7 55.4 46.9" stroke="#8a6a3a" stroke-width="0.9"/><path d="M53.2 49.4 Q53.2 62.3 43.9 63.2" stroke="#4aa8a0" stroke-width="0.6"/><path d="M14.7 52.0 Q11.7 57.0 17.6 61.2" stroke="#222" stroke-width="0.7"/></g><g fill="none" opacity=".6"><circle cx="62.7" cy="28.0" r="6.9" stroke="#5a5040" stroke-width=".5"/><circle cx="67.9" cy="7.4" r="7.5" stroke="#5a5040" stroke-width=".5"/><circle cx="61.5" cy="15.2" r="5.4" stroke="#5a5040" stroke-width=".5"/><circle cx="72.0" cy="9.5" r="6.1" stroke="#5a5040" stroke-width=".5"/><circle cx="70.0" cy="46.1" r="6.8" stroke="#5a5040" stroke-width=".5"/><circle cx="88.7" cy="40.6" r="7.8" stroke="#5a5040" stroke-width=".5"/><circle cx="78.4" cy="28.8" r="8.1" stroke="#5a5040" stroke-width=".5"/><circle cx="81.0" cy="57.5" r="7.6" stroke="#5a5040" stroke-width=".5"/><circle cx="82.4" cy="19.0" r="8.1" stroke="#5a5040" stroke-width=".5"/><circle cx="72.2" cy="11.3" r="4.3" stroke="#5a5040" stroke-width=".5"/></g>
</g>
<g font-family="Liberation Sans, sans-serif" font-size="12.5" fill="#151515"><text x="8.5" y="13.2" textLength="45" lengthAdjust="spacingAndGlyphs" transform="rotate(1.5 8 12)">FIONA APPLE</text></g>
<path d="M2 15 L56 16.5" stroke="#222" stroke-width=".9"/>
<g stroke="#555" stroke-width=".7" opacity=".7"><path d="M30 84h56M30 88h52M40 92h48"/></g>

<rect x="0" y="72.2" width="95.4" height="24.20" fill="#000" fill-opacity=".52"/>
<g font-family="Liberation Sans, sans-serif" font-size="9.7" fill="#fff" stroke="#fff" stroke-width=".25"><text x="3.8" y="82.4">The Idler Wheel Is Wiser Than the Driver of the Screw</text><text x="3.8" y="92.4">Fiona Apple</text></g>
</svg>
<svg class="abs" style="left:382.10px;top:286.70px" width="94.90" height="94.40" viewBox="0 0 95.4 95.4" preserveAspectRatio="none">
<defs>
<filter id="hN" x="0" y="0" width="100%" height="100%"><feTurbulence type="turbulence" baseFrequency=".2" numOctaves="2" seed="5"/><feColorMatrix type="matrix" values="0 0 0 0 0  0 0 0 0 0  0 0 0 0 0  3.4 0 0 0 -.62"/><feComposite in2="SourceGraphic" operator="in"/></filter>
<filter id="hB"><feGaussianBlur stdDeviation=".45"/></filter>
</defs>
<rect width="95.4" height="95.4" fill="#050505"/>
<rect x="4" y="4" width="63" height="89" fill="#ededed"/>
<rect x="4" y="4" width="63" height="89" fill="#000" filter="url(#hN)"/>
<g filter="url(#hB)">
<path d="M14 22 Q22 10 36 15 Q46 8 56 17 Q61 27 57 37 Q50 24 38 22 Q24 22 18 34Z" fill="#0a0a0a"/>
<path d="M24 36 Q27 25 38 26 Q49 25 51 37 Q53 46 47 52 Q40 58 31 54 Q22 48 24 36Z" fill="#f4f4f4"/>
<ellipse cx="31" cy="40" rx="4.2" ry="3.4" fill="#050505"/><ellipse cx="42.500" cy="39" rx="4" ry="3.4" fill="#050505"/><circle cx="42.500" cy="39" r="1.5" fill="#fff"/><circle cx="31" cy="40" r="1.2" fill="#fff"/>
<path d="M27 48 Q36 52 46 47 L44 53 Q36 57 29 53Z" fill="#111"/>
<path d="M45 53 Q53 41 51 29 Q59 41 55 55 Q51 65 43 63Z" fill="#0a0a0a"/>
<path d="M25 56 Q20 64 28 69 Q35 67 33 58Z" fill="#0a0a0a"/><path d="M28 58 Q36 62 34 72 Q28 76 24 70" stroke="#eee" stroke-width="1.6" fill="none"/>
<path d="M6 22 L13 22 L9.500 15Z M57 17 L62 17 L59.500 12Z" fill="#0a0a0a"/>
<rect x="55" y="23" width="8" height="27" fill="#111" opacity=".9"/>
<rect x="6" y="26" width="9" height="32" fill="#111" opacity=".7"/>
<rect x="4" y="70" width="63" height="23" fill="#555" opacity=".35"/>
</g>
<g font-family="Liberation Sans, sans-serif" font-weight="700" font-style="italic" fill="#050505" stroke="#050505" stroke-width=".5"><text x="15" y="18.500" font-size="10.500" textLength="43" lengthAdjust="spacingAndGlyphs">GRIMES</text></g>
<g font-family="Liberation Sans, sans-serif" font-weight="700" fill="#050505"><text x="6" y="10" font-size="5" textLength="40" lengthAdjust="spacingAndGlyphs">JUICE GRIMES</text></g>
<rect x="70.200" y="0" width=".7" height="95.4" fill="#3a8a7a"/>
<rect x="73" y="21" width="18" height="51" fill="#a0628c"/>
<g stroke="#7a4a6c" stroke-width=".4" opacity=".8"><path d="M73 25h18M73 29h18M73 33h18M73 37h18M73 41h18M73 45h18M73 49h18M73 53h18M73 57h18M73 61h18M73 65h18M73 69h18"/></g>
<rect x="74" y="77" width="9" height="9" fill="#c89ab4"/><path d="M76 79 q2.500 -1.500 4 1 q0 3 -2 5 q-2 -2 -2 -6z" fill="#a04a7a"/>
<g fill="#8a8a8a"><rect x="73" y="4" width="12" height="1.3"/><rect x="73" y="6.600" width="16" height=".8"/><rect x="73" y="8.400" width="14" height=".8"/><rect x="73" y="15.500" width="13" height="1.6"/><rect x="73" y="88" width="15" height=".8"/><rect x="73" y="90" width="13" height=".8"/><rect x="73" y="74" width="16" height=".7"/></g>

<rect x="0" y="72.2" width="95.4" height="24.20" fill="#000" fill-opacity=".52"/>
<g font-family="Liberation Sans, sans-serif" font-size="9.7" fill="#fff" stroke="#fff" stroke-width=".25"><text x="3.8" y="82.4">Visions</text><text x="3.8" y="92.4">Grimes</text></g>
</svg>
<svg class="abs" style="left:191.30px;top:382.10px" width="94.40" height="94.90" viewBox="0 0 95.4 95.4" preserveAspectRatio="none">
<defs>
<linearGradient id="iBg" x1="0" x2="1" y1="0" y2="0"><stop offset="0" stop-color="#cfc6c8"/><stop offset=".45" stop-color="#c8c2c2"/><stop offset=".8" stop-color="#a8a2a0"/><stop offset="1" stop-color="#8a8482"/></linearGradient>
<linearGradient id="iT" x1="0" x2="1" y1="0" y2="0"><stop offset="0" stop-color="#f6a21a"/><stop offset=".5" stop-color="#f36a22"/><stop offset="1" stop-color="#e8283a"/></linearGradient>
<filter id="iB"><feGaussianBlur stdDeviation=".8"/></filter><filter id="iB2"><feGaussianBlur stdDeviation="2"/></filter>
</defs>
<rect width="95.4" height="95.4" fill="url(#iBg)"/>
<g filter="url(#iB2)"><path d="M22 0 L95 0 L95 20 L60 14 L22 8Z" fill="#e4e0e0"/><path d="M76 24 L95.4 20 L95.4 74 L80 70 Q74 50 76 24Z" fill="#2e2626"/><rect x="0" y="0" width="20" height="95" fill="#c2b6ba"/></g>
<g filter="url(#iB)">
<path d="M27 1 L30 -1 L94 29 L92 33Z" fill="#1d1d20"/><path d="M44 11 L90 32" stroke="#4a8a94" stroke-width="1.2"/>
<path d="M36 6 L38 16 L41 16 L40 8Z" fill="#222"/><path d="M56 18 L54 28 L60 30 L62 22Z" fill="#222"/>
<path d="M58 12 Q62 8 66 12 L68 22 Q74 40 72 58 Q70 70 62 74 L56 66 Q64 48 60 30Z" fill="#5a3420"/>
<path d="M60 14 Q64 12 66 16 L66 22 L60 22Z" fill="#3a2014"/>
<path d="M25 55 Q25 40 42 39 Q58 40 59 55Z" fill="#f3f3f3"/>
<path d="M25 52 Q30 50 40 52 Q52 54 58 56 Q58 70 50 78 Q40 84 32 78 Q24 70 25 52Z" fill="#5d3522"/>
<path d="M26 56 Q30 54 34 58 Q30 66 27 64Z" fill="#8a5a3c" opacity=".8"/>
<rect x="19" y="46" width="8" height="17" fill="#141414"/>
<ellipse cx="34" cy="57" rx="2.4" ry="1.6" fill="#f0e8e0"/><circle cx="34.6" cy="57" r="1" fill="#000"/>
<ellipse cx="50" cy="62" rx="3.6" ry="5" fill="#4a2818"/>
<path d="M14 95.4 Q18 80 34 80 L52 76 Q66 80 70 95.4Z" fill="#efeaea"/>
<path d="M48 74 Q54 72 60 76 L64 95 L52 95Z" fill="#e84a4a"/>
<path d="M16 90 Q30 82 48 88 L48 95.4 L14 95.4Z" fill="#4aa0c0"/><path d="M22 90 Q30 86 40 90 L40 95.4 L22 95.4Z" fill="#e8c840"/>
</g>
<text x="21.5" y="41" font-family="Liberation Sans, sans-serif" font-weight="700" font-size="17" fill="url(#iT)" textLength="49" lengthAdjust="spacingAndGlyphs" transform="rotate(3 22 40)">TOO HIGH TO RIOT</text>
<rect x="76.5" y="83" width="12.5" height="8" fill="#111"/><rect x="77.5" y="85.5" width="10.5" height="2.4" fill="#ddd"/>

<rect x="0" y="72.2" width="95.4" height="24.20" fill="#000" fill-opacity=".52"/>
<g font-family="Liberation Sans, sans-serif" font-size="9.7" fill="#fff" stroke="#fff" stroke-width=".25"><text x="3.8" y="82.4">Too High to Riot</text><text x="3.8" y="92.4">Bas</text></g>
</svg>
<svg class="abs" style="left:286.70px;top:382.10px" width="94.40" height="94.90" viewBox="0 0 95.4 95.4" preserveAspectRatio="none">
<defs>
<linearGradient id="jS" x1="0" x2="1" y1="0" y2="1"><stop offset="0" stop-color="#c8506a"/><stop offset=".25" stop-color="#9a64b8"/><stop offset=".55" stop-color="#5656a8"/><stop offset="1" stop-color="#2e2e72"/></linearGradient>
<radialGradient id="jSun" cx=".5" cy=".5" r=".5"><stop offset="0" stop-color="#fff6d0"/><stop offset=".22" stop-color="#ffc070"/><stop offset=".6" stop-color="#f05a4a" stop-opacity=".7"/><stop offset="1" stop-color="#e04060" stop-opacity="0"/></radialGradient>
<linearGradient id="jG" x1="0" x2="0" y1="0" y2="1"><stop offset="0" stop-color="#7a4a9a"/><stop offset=".4" stop-color="#4a3a7a"/><stop offset="1" stop-color="#14122a"/></linearGradient>
<filter id="jB"><feGaussianBlur stdDeviation=".7"/></filter><filter id="jB2"><feGaussianBlur stdDeviation="2.2"/></filter>
</defs>
<rect width="95.4" height="95.4" fill="url(#jS)"/>
<g filter="url(#jB2)">
<path d="M0 2 Q12 -2 24 8 Q30 16 20 22 Q8 26 0 20Z" fill="#e83a3a"/><path d="M4 8 Q14 4 22 12 Q14 20 4 18Z" fill="#f8a040"/>
<path d="M20 28 Q40 22 60 10 Q80 2 95 6 L95 16 Q70 18 50 30 Q34 38 20 36Z" fill="#d8b0e0" opacity=".85"/>
<path d="M30 38 Q50 34 70 24 L95 22 L95 34 Q70 36 50 44 L30 46Z" fill="#6464b8" opacity=".8"/>
<path d="M64 4 Q80 0 95 4 L95 12 Q80 8 66 12Z" fill="#3a4a98"/>
<path d="M0 38 Q10 34 26 38 L26 50 L0 50Z" fill="#f0a8d8" opacity=".85"/>
<path d="M22 14 Q34 10 44 4 L60 0 L30 0Z" fill="#7a6ac0"/>
</g>
<circle cx="8" cy="25" r="14" fill="url(#jSun)"/>
<path d="M8 25 L30 44 M8 25 L22 50 M8 25 L0 44" stroke="#ffd0a0" stroke-width=".6" opacity=".7"/>
<rect x="0" y="64" width="95.4" height="32" fill="url(#jG)"/>
<g filter="url(#jB2)"><path d="M0 60 L14 52 L28 60 L40 56 L40 68 L0 68Z" fill="#3a3a8a"/><path d="M70 58 L84 48 L95 54 L95 68 L70 68Z" fill="#3a2a6a"/><path d="M0 68 Q30 64 50 72 L20 82 L0 80Z" fill="#d878a8" opacity=".75"/><path d="M50 72 Q70 66 95 72 L95 80 L60 80Z" fill="#9a5ac0" opacity=".6"/></g>
<g filter="url(#jB)">
<circle cx="26" cy="61" r="10" fill="#12122a"/><circle cx="26" cy="61" r="5.600" fill="#55558a"/><circle cx="26" cy="61" r="3" fill="#12122a"/>
<circle cx="75" cy="60" r="11.500" fill="#12122a"/><circle cx="75" cy="60" r="7" fill="#6a6a9a"/><circle cx="75" cy="60" r="3.400" fill="#12122a"/>
<path d="M16 52 Q28 42 44 44 L62 40 Q68 46 66 54 L52 66 L28 66 Q20 60 16 52Z" fill="#17172e"/>
<path d="M36 50 Q46 46 56 50 L54 58 L38 58Z" fill="#4a4a7a"/>
<path d="M57 20 L61 22 L77 58 L72 60Z" fill="#2a2a48"/><path d="M52 24 L66 22 L66 24.500 L52 27.500Z" fill="#3a3a64"/>
<path d="M14 64 L40 66 L40 68 L14 67Z" fill="#9a9ac8"/>
<path d="M34 32 Q38 26 45 28 L51 40 Q55 46 51 50 L42 50 Q36 42 34 32Z" fill="#c8c8e8"/>
<circle cx="42" cy="26" r="4" fill="#2a1a1a"/>
<path d="M45 31 L60 26 L60 28.500 L47 35Z" fill="#b8b0d8"/>
<path d="M46 48 L58 56 L54 63 L44 54Z" fill="#a8a8d0"/>
</g>
<rect x="0" y="84" width="95.4" height="12" fill="#0c0c1a" opacity=".7"/>
<g fill="#2a2a5a" opacity=".85"><rect x="18" y="8" width="2" height="1.600"/><rect x="24" y="13" width="2" height="1.600"/><rect x="30" y="20" width="1.600" height="3"/><rect x="52" y="10" width="2" height="1.600"/><rect x="68" y="2" width="2" height="2"/><rect x="76" y="16" width="2" height="2"/><rect x="83" y="40" width="1.600" height="3"/></g>

<rect x="0" y="72.2" width="95.4" height="24.20" fill="#000" fill-opacity=".52"/>
<g font-family="Liberation Sans, sans-serif" font-size="9.7" fill="#fff" stroke="#fff" stroke-width=".25"><text x="3.8" y="82.4">Last Year Was Weird, Vol. 2</text><text x="3.8" y="92.4">Tkay Maidza</text></g>
</svg>
<svg class="abs" style="left:382.10px;top:382.10px" width="94.90" height="94.90" viewBox="0 0 95.4 95.4" preserveAspectRatio="none">
<defs>
<linearGradient id="kSky" x1="0" x2="1" y1="0" y2="0"><stop offset="0" stop-color="#8a98b0"/><stop offset=".55" stop-color="#4a78c0"/><stop offset="1" stop-color="#3a68b8"/></linearGradient>
<filter id="kB"><feGaussianBlur stdDeviation=".8"/></filter><filter id="kB2"><feGaussianBlur stdDeviation="1.6"/></filter>
</defs>
<rect width="95.4" height="95.4" fill="url(#kSky)"/>
<g filter="url(#kB)">
<rect x="0" y="0" width="30" height="22" fill="#7a4a38"/><rect x="0" y="14" width="44" height="16" fill="#8a8078"/>
<rect x="56" y="10" width="40" height="26" fill="#8a5a48"/><rect x="66" y="0" width="4" height="12" fill="#d8d0c8"/><rect x="76" y="2" width="8" height="16" fill="#b8b0a8"/><rect x="86" y="6" width="10" height="30" fill="#9a5238"/>
<rect x="0" y="26" width="95.4" height="16" fill="#5a5a58" opacity=".75"/>
<rect x="0" y="40" width="95.4" height="56" fill="#55843e"/>
<path d="M0 62 Q30 50 48 56 L48 96 L0 96Z" fill="#2f5a9a"/>
<path d="M6 60 Q14 46 40 44 L38 50 Q20 52 12 62Z" fill="#3a62a8"/>
<path d="M50 70 Q80 66 95.4 82 L95.4 96 L50 96Z" fill="#28508c"/>
<path d="M4 58 Q16 46 42 44" stroke="#e8e8e8" stroke-width="1" fill="none"/><path d="M70 60 L95 58" stroke="#dfe8d8" stroke-width="1"/>
<rect x="28" y="2" width="18" height="13" fill="none" stroke="#ddd" stroke-width="1.2"/><rect x="34" y="12" width="6" height="3" fill="#d04030"/>
<g stroke="#1c1c1c" stroke-width="1.1"><path d="M9 6v40M32 4v30M74 14v36M88 10v42"/></g>
<path d="M22 30 Q26 26 29 30 L30 42 L28 56 L25 56 L24 44 L22 44Z" fill="#5a5a6a"/><path d="M23 42 L30 42 L29 58 L24 58Z" fill="#c02828"/>
<!-- girl -->
<path d="M41 14 Q44 6 51 7 Q58 9 58 20 Q60 30 58 38 L52 40 L46 40 Q44 50 42 60 L36 58 Q36 44 39 28Z" fill="#141218"/>
<ellipse cx="49" cy="20" rx="6.4" ry="8" fill="#b47a52"/><path d="M45 23 Q49 27 54 23 Q50 25 45 23Z" fill="#fff"/>
<path d="M30 52 Q34 41 44 38 L58 38 Q70 42 72 56 Q76 70 70 80 L62 96 L34 96 Q28 70 30 52Z" fill="#1d1f44"/><path d="M45 27 L54 27 L55 38 Q50 42 45 38Z" fill="#9a6644"/>
<path d="M40 58 Q50 54 58 60 L58 70 L40 70Z" fill="#6a8a5a"/><path d="M42 60 L56 60 L56 68 L42 68Z" fill="#c8c8a0" opacity=".6"/>
<path d="M44 74 Q60 66 72 70 Q74 78 66 82 L46 84Z" fill="#c42424"/>
<circle cx="21" cy="76" r="13" fill="#b46c30"/><path d="M10 70 Q22 74 32 84 M21 63 Q19 76 23 89" stroke="#6a3a14" stroke-width=".9" fill="none"/>
<path d="M30 72 Q38 70 44 76 L42 84 Q36 86 32 82Z" fill="#a86c48"/>
</g>

<rect x="0" y="72.2" width="95.4" height="24.20" fill="#000" fill-opacity=".52"/>
<g font-family="Liberation Sans, sans-serif" font-size="9.7" fill="#fff" stroke="#fff" stroke-width=".25"><text x="3.8" y="82.4">1992 Deluxe</text><text x="3.8" y="92.4">Princess Nokia</text></g>
</svg>
</div>
<div class="abs" id="share" style="left:1518px;top:745px;width:211px;height:35px;border-radius:5px;background:#353070"></div>
<span class="t" style="left:1542.84px;top:754.77px;font-size:16px;color:#fff;transform:scaleX(1.0140);font-weight:400;">Visualize &amp; share</span>
<svg class="abs" style="left:1682px;top:753px" width="20" height="20" viewBox="1682 753 20 20"><rect x="1684.4" y="755.3" width="14.6" height="14.4" rx="2" fill="none" stroke="#fff" stroke-width="2"/><line x1="1691.7" y1="755" x2="1691.7" y2="770" stroke="#fff" stroke-width="2"/><line x1="1684" y1="762.5" x2="1699.4" y2="762.5" stroke="#fff" stroke-width="2"/></svg>
</section>
</main>
</body></html>
